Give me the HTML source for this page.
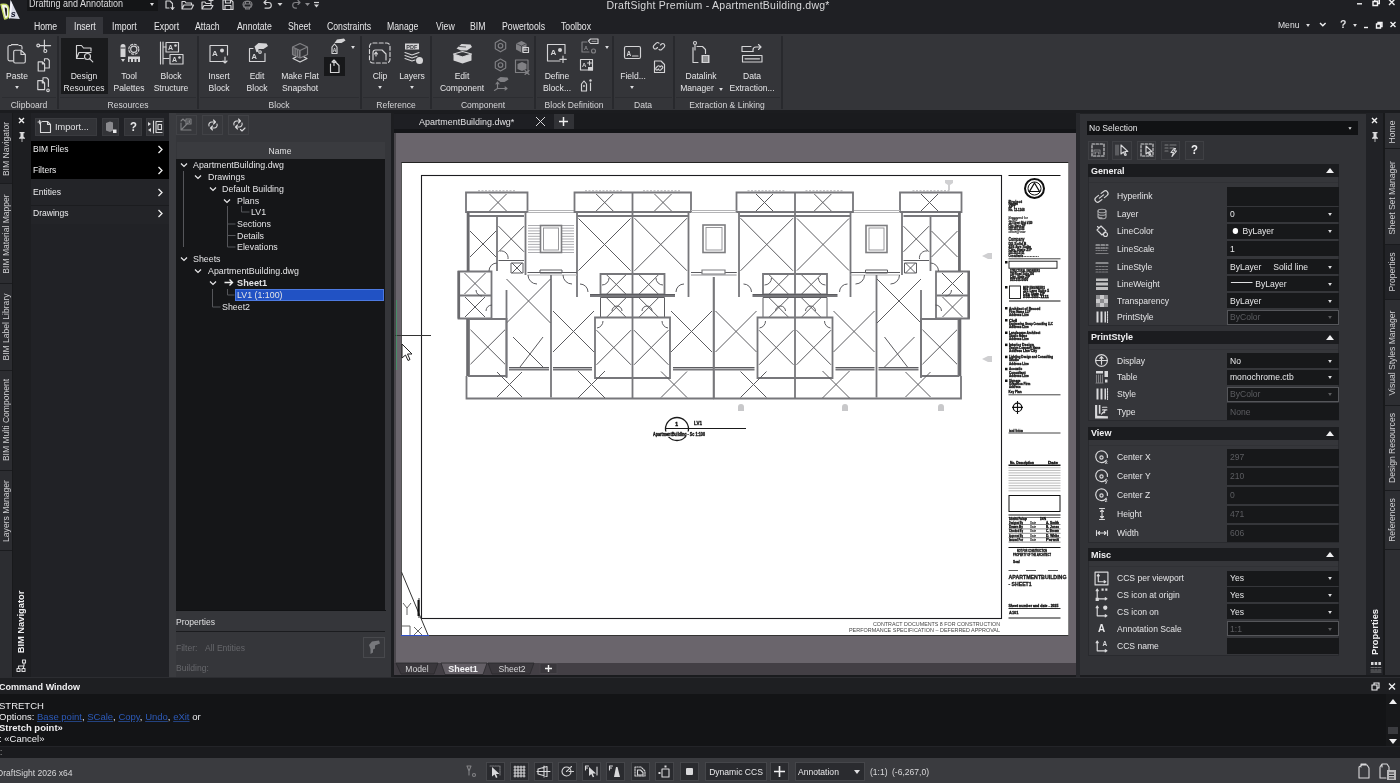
<!DOCTYPE html>
<html lang="en"><head><meta charset="utf-8"><title>DraftSight Premium - ApartmentBuilding.dwg*</title>
<style>
*{box-sizing:border-box;margin:0;padding:0}
html,body{width:1400px;height:783px;overflow:hidden;background:#1f2023}
body{font-family:"Liberation Sans",sans-serif;font-size:10.5px;color:#e4e4e6;position:relative;-webkit-font-smoothing:antialiased}
.a{position:absolute}
.t{position:absolute;white-space:nowrap;line-height:1;font-size:9.5px;transform-origin:0 50%;transform:scaleX(.9)}
.c{transform-origin:50% 50%;transform:translateX(-50%) scaleX(.9)}
svg{position:absolute;overflow:visible}
.ic{stroke:#d9d9db;fill:none;stroke-width:1.1;stroke-linecap:round;stroke-linejoin:round}
.icf{fill:#d9d9db;stroke:none}
.dim{opacity:.45}
/* top */
#title{left:0;top:0;width:1400px;height:34px;background:#1f2024}
#ribbon{left:0;top:34px;width:1400px;height:76px;background:#343539}
.gsep{position:absolute;top:36px;width:1.5px;height:73px;background:#28292d}
.glab{position:absolute;top:97px;height:1px;background:#2c2d31}
.gl{position:absolute;top:99.5px;font-size:9.5px;color:#d6d6d8;white-space:nowrap;transform:translateX(-50%) scaleX(.9);line-height:1}
.rl{position:absolute;font-size:9.5px;color:#e6e6e8;white-space:nowrap;transform:translateX(-50%) scaleX(.9);line-height:1}
.mt{position:absolute;top:21.5px;font-size:10px;color:#e6e6e8;white-space:nowrap;line-height:1;transform-origin:0 50%;transform:scaleX(.87)}
.arr{position:absolute;width:0;height:0;border-left:2.5px solid transparent;border-right:2.5px solid transparent;border-top:3px solid #e0e0e2}
#app{position:absolute;left:0;top:0;width:1400px;height:783px;will-change:transform}
</style></head><body><div id="app">

<div id="title" class="a"></div>
<div class="a" style="left:27px;top:0px;width:131px;height:11px;background:#141517;"></div>
<div class="t" style="left:28.6px;top:-0.7px;font-size:10px;color:#dcdcde;transform:scaleX(0.9)">Drafting and Annotation</div>
<div class="arr" style="left:150px;top:3px"></div>
<div class="t" style="left:606.5px;top:-0.5px;font-size:10.5px;color:#d8d8da;letter-spacing:.25px;transform:scaleX(1)">DraftSight Premium - ApartmentBuilding.dwg*</div>
<div class="a" style="left:66px;top:17px;width:37px;height:17px;background:#34353a;"></div>
<div class="mt" style="left:34px">Home</div>
<div class="mt" style="left:74px">Insert</div>
<div class="mt" style="left:112px">Import</div>
<div class="mt" style="left:154px">Export</div>
<div class="mt" style="left:195px">Attach</div>
<div class="mt" style="left:237px">Annotate</div>
<div class="mt" style="left:288px">Sheet</div>
<div class="mt" style="left:327px">Constraints</div>
<div class="mt" style="left:387px">Manage</div>
<div class="mt" style="left:436px">View</div>
<div class="mt" style="left:470px">BIM</div>
<div class="mt" style="left:502px">Powertools</div>
<div class="mt" style="left:561px">Toolbox</div>
<div class="t" style="left:1278px;top:20px;font-size:9.5px;color:#e0e0e2">Menu</div>
<div class="arr" style="left:1306px;top:24px;transform:scale(.95)"></div>
<div class="arr" style="left:1353px;top:24px;transform:scale(.95)"></div>
<div class="t" style="left:1340px;top:19px;font-size:11px;font-weight:bold;color:#e0e0e2;transform:scaleX(0.95)">?</div>
<div id="ribbon" class="a"></div>
<div class="a" style="left:0px;top:110px;width:1400px;height:3.5px;background:#1b1c1f;"></div>
<div class="glab" style="left:2px;width:54px"></div>
<div class="gsep" style="left:57px"></div>
<div class="glab" style="left:60px;width:136px"></div>
<div class="gsep" style="left:197px"></div>
<div class="glab" style="left:200px;width:159px"></div>
<div class="gsep" style="left:360px"></div>
<div class="glab" style="left:363px;width:66px"></div>
<div class="gsep" style="left:430px"></div>
<div class="glab" style="left:433px;width:100px"></div>
<div class="gsep" style="left:534px"></div>
<div class="glab" style="left:537px;width:74px"></div>
<div class="gsep" style="left:612px"></div>
<div class="glab" style="left:615px;width:57px"></div>
<div class="gsep" style="left:673px"></div>
<div class="glab" style="left:676px;width:104px"></div>
<div class="gsep" style="left:781px"></div>
<div class="gl" style="left:28.5px">Clipboard</div>
<div class="gl" style="left:127.5px">Resources</div>
<div class="gl" style="left:279.0px">Block</div>
<div class="gl" style="left:395.5px">Reference</div>
<div class="gl" style="left:482.5px">Component</div>
<div class="gl" style="left:573.5px">Block Definition</div>
<div class="gl" style="left:643.0px">Data</div>
<div class="gl" style="left:727px">Extraction &amp; Linking</div>
<div class="a" style="left:61px;top:38px;width:47px;height:56px;background:#1a1b1d;"></div>
<div class="a" style="left:324px;top:57px;width:21px;height:18.5px;background:#17181a;"></div>
<div class="rl" style="left:17px;top:71px">Paste</div>
<div class="rl" style="left:84px;top:71px">Design</div>
<div class="rl" style="left:84px;top:83px">Resources</div>
<div class="rl" style="left:129px;top:71px">Tool</div>
<div class="rl" style="left:129px;top:83px">Palettes</div>
<div class="rl" style="left:171px;top:71px">Block</div>
<div class="rl" style="left:171px;top:83px">Structure</div>
<div class="rl" style="left:219px;top:71px">Insert</div>
<div class="rl" style="left:219px;top:83px">Block</div>
<div class="rl" style="left:257px;top:71px">Edit</div>
<div class="rl" style="left:257px;top:83px">Block</div>
<div class="rl" style="left:300px;top:71px">Make Flat</div>
<div class="rl" style="left:300px;top:83px">Snapshot</div>
<div class="rl" style="left:380px;top:71px">Clip</div>
<div class="rl" style="left:412px;top:71px">Layers</div>
<div class="rl" style="left:462px;top:71px">Edit</div>
<div class="rl" style="left:462px;top:83px">Component</div>
<div class="rl" style="left:557px;top:71px">Define</div>
<div class="rl" style="left:557px;top:83px">Block...</div>
<div class="rl" style="left:633px;top:71px">Field...</div>
<div class="rl" style="left:701px;top:71px">Datalink</div>
<div class="rl" style="left:697px;top:83px">Manager</div>
<div class="rl" style="left:752px;top:71px">Data</div>
<div class="rl" style="left:752px;top:83px">Extraction...</div>
<div class="arr" style="left:15px;top:86px;transform:scale(.95)"></div>
<div class="arr" style="left:378px;top:86px;transform:scale(.95)"></div>
<div class="arr" style="left:410px;top:86px;transform:scale(.95)"></div>
<div class="arr" style="left:630px;top:86px;transform:scale(.95)"></div>
<div class="arr" style="left:719px;top:88px;transform:scale(.95)"></div>
<div class="arr" style="left:351px;top:46px;transform:scale(.95)"></div>
<div class="arr" style="left:605px;top:46px;transform:scale(.95)"></div>
<svg style="left:0;top:0" width="1400" height="113" viewBox="0 0 1400 113">
<path d="M10.600 0L19.800 19.100 8.900 18.300z" fill="#d9dbe7"/><path d="M10.600 0L12.500 5 10 18.400 8.900 18.300z" fill="#f4f5fa"/>
<path d="M0.900 4.300C4.500 3.600 8.300 4.200 8.500 8L8.700 15C8.600 17.500 7 18.800 4.600 19z" fill="#f2f4ea" stroke="#c3d860" stroke-width="1.300" stroke-linejoin="round"/><path d="M4.600 7.600C6.200 7.400 6.900 8.200 6.900 9.500V14.200C6.900 15.300 6.400 15.900 5.900 16z" fill="#101014"/>
<text x="10.700" y="16.800" font-size="9" font-weight="bold" font-style="italic" fill="#14162a" font-family="Liberation Sans,sans-serif">s</text>
<path d="M166 1v7h3M166 1h4l2.500 2.500M172.500 4.500v.5M171 7.500l1.500 2 1.500-2M172.500 9.500v-4" stroke="#d4d4d6" fill="none" stroke-width="1.150" stroke-linecap="round" stroke-linejoin="round"/>
<path d="M182 9V1.500h3l1 1.500h5.500v2M182 9l2-4h9.500l-2 4z" stroke="#d4d4d6" fill="none" stroke-width="1.150" stroke-linecap="round" stroke-linejoin="round"/>
<path d="M202 9V2h3l1 1.500h5V5M202 9l2-3.500h9l-2 3.500zM209 .5h4M211 -1.500v4" stroke="#d4d4d6" fill="none" stroke-width="1.150" stroke-linecap="round" stroke-linejoin="round"/>
<path d="M223 0h8l2 2v7.500h-10zM225.500 0v3h5v-3M225 9.500v-4h6v4" stroke="#d4d4d6" fill="none" stroke-width="1.150" stroke-linecap="round" stroke-linejoin="round" stroke-width="1.300"/>
<path d="M244 4h7v3h-7zM245.500 4v-2.500h4v2.500M245.500 7v2h4v-2" stroke="#808084" fill="none" stroke-width="1.150" stroke-linecap="round" stroke-linejoin="round"/>
<ellipse cx="247.500" cy="4.500" rx="4.500" ry="3.500" stroke="#808084" fill="none" stroke-width="1.150" stroke-linecap="round" stroke-linejoin="round"/>
<path d="M264 2.500h4.500a2.800 2.800 0 0 1 0 5.600h-3.500M266 .5l-2 2 2 2" stroke="#d4d4d6" fill="none" stroke-width="1.150" stroke-linecap="round" stroke-linejoin="round" stroke-width="1.500"/>
<path d="M300 2.500h-4.500a2.800 2.800 0 0 0 0 5.600h1M298 .5l2 2-2 2" stroke="#808084" fill="none" stroke-width="1.150" stroke-linecap="round" stroke-linejoin="round" stroke-width="1.400"/>
<path d="M277.5 3h5l-2.500 3z" fill="#d4d4d6"/>
<path d="M305 3h5l-2.500 3z" fill="#8c8c90"/>
<path d="M314 4.5h5l-2.500 3z" fill="#d4d4d6"/>
<path d="M314 2.500h5" stroke="#d4d4d6" stroke-width="1.200"/>
<path d="M1357 3.800h5" stroke="#f2f2f4" fill="none" stroke-width="1.400"/><path d="M1373 1.500h4.500v4h-4.500zM1374.800 1.500v-2h4.500v4h-1.800" stroke="#f2f2f4" fill="none" stroke-width="1.400" stroke-width="1.100"/><path d="M1389 -.5l5.500 5.500M1394.500 -.5l-5.500 5.500" stroke="#f2f2f4" fill="none" stroke-width="1.400" stroke-width="1.600"/>
<path d="M1364 27.500h4" stroke="#f2f2f4" fill="none" stroke-width="1.400"/><path d="M1376.500 24h4v4h-4zM1378 24v-1.500h4v4h-1.500" stroke="#f2f2f4" fill="none" stroke-width="1.400" stroke-width="1"/><path d="M1390.500 22l5 5M1395.500 22l-5 5" stroke="#f2f2f4" fill="none" stroke-width="1.400" stroke-width="1.400"/>
<path d="M1320 23l2.800 2.800 2.800-2.800" stroke="#f2f2f4" fill="none" stroke-width="1.400" stroke-width="1.500"/>
<path d="M13 60.800H9.500a1.500 1.500 0 0 1-1.500-1.500V47a1.500 1.500 0 0 1 1.500-1.500H11M19 45.500h1.500a1.500 1.500 0 0 1 1.500 1.500v2" stroke="#d4d4d6" fill="none" stroke-width="1.150" stroke-linecap="round" stroke-linejoin="round"/>
<path d="M11.500 44.600h6.500" stroke="#d4d4d6" fill="none" stroke-width="1.150" stroke-linecap="round" stroke-linejoin="round" stroke-width="1.900"/>
<path d="M15.200 50.200H21L25.300 54.500V61.500a1.500 1.500 0 0 1-1.500 1.500H15.200a1.500 1.500 0 0 1-1.500-1.500V51.700a1.500 1.500 0 0 1 1.500-1.500zM21 50.200V54.500H25.300" stroke="#d4d4d6" fill="none" stroke-width="1.150" stroke-linecap="round" stroke-linejoin="round"/>
<path d="M39.600 45.600H50.600" stroke="#d4d4d6" fill="none" stroke-width="1.150" stroke-linecap="round" stroke-linejoin="round" stroke-width="1.500"/><path d="M44.400 40V49.500" stroke="#d4d4d6" fill="none" stroke-width="1.150" stroke-linecap="round" stroke-linejoin="round" stroke-width="1.500"/><circle cx="38.200" cy="45.500" r="1.400" stroke="#d4d4d6" fill="none" stroke-width="1.150" stroke-linecap="round" stroke-linejoin="round"/><circle cx="45.300" cy="51" r="1.500" stroke="#d4d4d6" fill="none" stroke-width="1.150" stroke-linecap="round" stroke-linejoin="round"/>
<path d="M44.500 61v-2.300h3l1.800 1.800v7.500h-4M38.200 61.800h4.200l2.200 2.200v7h-6.400zM42.400 61.800v2.200h2.200" stroke="#d4d4d6" fill="none" stroke-width="1.150" stroke-linecap="round" stroke-linejoin="round"/>
<path d="M43 80v-2.300h3.600l1.800 1.800v7M37.800 80.600h4.500l2.300 2.300v6.700h-6.800zM42.300 80.600v2.300h2.300" stroke="#d4d4d6" fill="none" stroke-width="1.150" stroke-linecap="round" stroke-linejoin="round"/>
<circle cx="48" cy="90.300" r="1.300" stroke="#d4d4d6" fill="none" stroke-width="1.150" stroke-linecap="round" stroke-linejoin="round"/>
<path d="M76.500 58.500v-13h5l2 2.500h7.500v3M76.500 58.500l2.500-6h12M76.500 58.500h7" stroke="#d4d4d6" fill="none" stroke-width="1.150" stroke-linecap="round" stroke-linejoin="round"/>
<circle cx="87.500" cy="56.500" r="3" stroke="#d4d4d6" fill="none" stroke-width="1.150" stroke-linecap="round" stroke-linejoin="round"/>
<path d="M89.800 58.800l3 3" stroke="#d4d4d6" fill="none" stroke-width="1.150" stroke-linecap="round" stroke-linejoin="round"/>
<path d="M120.500 46.500a2.500 2.500 0 0 1 5 0v10.500h-5zM121 59h4l-2 3z" fill="#d4d4d6"/><rect x="120.500" y="47.500" width="5" height="1" fill="#343539"/>
<circle cx="133.800" cy="49.200" r="5" stroke="#d4d4d6" fill="none" stroke-width="1.150" stroke-linecap="round" stroke-linejoin="round" stroke-width="1.800" stroke-dasharray="2.100 1.827" stroke-linecap="butt"/><circle cx="133.800" cy="49.200" r="3.100" stroke="#d4d4d6" fill="none" stroke-width="1.150" stroke-linecap="round" stroke-linejoin="round" stroke-width="2.600"/>
<path d="M128 56.500h12v5.500h-2v-3h-1.500v3h-2v-3h-1.500v3h-2v-3h-1.500v3h-1.500z" fill="#d4d4d6"/>
<path d="M160.500 42v22M163 42v22M163 47h3M163 58.500h6" stroke="#d4d4d6" fill="none" stroke-width="1.150" stroke-linecap="round" stroke-linejoin="round"/>
<rect x="166" y="42.500" width="12.500" height="9.500" stroke="#d4d4d6" fill="none" stroke-width="1.150" stroke-linecap="round" stroke-linejoin="round" stroke-width="1.300"/><rect x="170" y="54.500" width="13" height="9.500" stroke="#d4d4d6" fill="none" stroke-width="1.150" stroke-linecap="round" stroke-linejoin="round" stroke-width="1.300"/>
<text x="168" y="50" font-size="7" font-weight="bold" fill="#d4d4d6" font-family="Liberation Sans,sans-serif">A</text><circle cx="175.5" cy="45.5" r="1.300" fill="#d4d4d6"/>
<text x="172" y="62" font-size="7" font-weight="bold" fill="#d4d4d6" font-family="Liberation Sans,sans-serif">A</text><circle cx="179.5" cy="57.5" r="1.300" fill="#d4d4d6"/>
<path d="M224 61.500h-14v-16h17.500v9.500" stroke="#d4d4d6" fill="none" stroke-width="1.150" stroke-linecap="round" stroke-linejoin="round" stroke-width="1.300"/><text x="212" y="56" font-size="8" font-weight="bold" fill="#d4d4d6" font-family="Liberation Sans,sans-serif">A</text><circle cx="222" cy="50.500" r="2" fill="#d4d4d6"/>
<path d="M225 57v5.500M223 61l2 2 2-2" stroke="#d4d4d6" fill="none" stroke-width="1.150" stroke-linecap="round" stroke-linejoin="round"/>
<path d="M253 48.500h-3.500v13h15.500v-8" stroke="#d4d4d6" fill="none" stroke-width="1.150" stroke-linecap="round" stroke-linejoin="round" stroke-width="1.300"/><text x="251.500" y="58.500" font-size="7.500" font-weight="bold" fill="#d4d4d6" font-family="Liberation Sans,sans-serif">A</text><circle cx="260" cy="52" r="1.300" stroke="#d4d4d6" fill="none" stroke-width="1.150" stroke-linecap="round" stroke-linejoin="round" stroke-width=".9"/>
<path d="M254.500 46.500l4-3.500 8 .5 1.500 2.500-4.500 3h-5v2.500l-2 .8z" fill="#d4d4d6"/>
<path d="M292.500 47l7.500-3.500 7.500 3.500v7.500l-7.500 3.500-7.500-3.500zM292.500 47l7.500 3.500 7.500-3.500M300 50.500v7.500" stroke="#808084" fill="none" stroke-width="1.150" stroke-linecap="round" stroke-linejoin="round" stroke-width="1.200"/><path d="M293 58.500l7 3.500 7-3.500M293 58.500l3-1.500M307 58.500l-3-1.500" stroke="#d4d4d6" fill="none" stroke-width="1.150" stroke-linecap="round" stroke-linejoin="round" stroke-width="1"/>
<path d="M294.0 48.5v6.500" stroke="#808084" fill="none" stroke-width="1.150" stroke-linecap="round" stroke-linejoin="round" stroke-width=".6"/>
<path d="M295.8 49.3v6.500" stroke="#808084" fill="none" stroke-width="1.150" stroke-linecap="round" stroke-linejoin="round" stroke-width=".6"/>
<path d="M297.6 50.1v6.500" stroke="#808084" fill="none" stroke-width="1.150" stroke-linecap="round" stroke-linejoin="round" stroke-width=".6"/>
<path d="M299.4 50.9v6.500" stroke="#808084" fill="none" stroke-width="1.150" stroke-linecap="round" stroke-linejoin="round" stroke-width=".6"/>
<path d="M332 53.500v-6.500l2.500-3 2.500 3v6.500z" stroke="#d4d4d6" fill="none" stroke-width="1.150" stroke-linecap="round" stroke-linejoin="round" stroke-width="1.200"/><text x="332.800" y="52" font-size="5" font-weight="bold" fill="#d4d4d6" font-family="Liberation Sans,sans-serif">A</text><path d="M334.500 43l2.500-3.500 7-1 1.500 2-4 2.500h-4z" fill="#d4d4d6"/>
<path d="M330.500 64v8.500h8.500v-7l-3-3h-3M334 65.500v-5M332 62l2-2 2 2" stroke="#d4d4d6" fill="none" stroke-width="1.150" stroke-linecap="round" stroke-linejoin="round"/>
<rect x="369.500" y="43" width="20.500" height="20" rx="3.500" stroke="#d4d4d6" fill="none" stroke-width="1.150" stroke-linecap="round" stroke-linejoin="round" stroke-width="1.400" stroke-dasharray="4 2.200"/>
<path d="M373 60v-7.500a2.500 2.500 0 0 1 2.500-2.500h6.500l4 4v6M374.500 54l1.500-2 1.500 2M376 52v4" stroke="#d4d4d6" fill="none" stroke-width="1.150" stroke-linecap="round" stroke-linejoin="round"/>
<rect x="405" y="43.500" width="14" height="6" fill="#d4d4d6"/><text x="406.300" y="48.800" font-size="5.500" font-weight="bold" fill="#343539" font-family="Liberation Sans,sans-serif">PDF</text>
<path d="M405 52.500l7 2.500 7-2.500M405 55.500l7 2.500 5-1.800M405 58.500l7 2.500 3-1" stroke="#d4d4d6" fill="none" stroke-width="1.150" stroke-linecap="round" stroke-linejoin="round"/>
<circle cx="419.500" cy="60.500" r="3.500" fill="#d4d4d6"/>
<path d="M453.500 54l9 3v6.500l-9-3zM471.500 54l-9 3v6.500l9-3z" fill="#d4d4d6"/><path d="M453.500 54l9-2.500 9 2.500-9 3z" stroke="#d4d4d6" fill="none" stroke-width="1.150" stroke-linecap="round" stroke-linejoin="round"/><path d="M456.500 48.500l5-4.500 9 .5 1.500 2.500-5 3.500h-6z" fill="#d4d4d6"/><path d="M459 46.500l7 .5" stroke="#343539" stroke-width=".8"/>
<path d="M500.500 39.8l5.200 3v6l-5.200 3-5.200-3v-6z" stroke="#808084" fill="none" stroke-width="1.150" stroke-linecap="round" stroke-linejoin="round" stroke-width="1.300"/><circle cx="500.500" cy="45.8" r="2.300" stroke="#808084" fill="none" stroke-width="1.150" stroke-linecap="round" stroke-linejoin="round"/>
<path d="M500.500 59l5.200 3v6l-5.200 3-5.200-3v-6z" stroke="#808084" fill="none" stroke-width="1.150" stroke-linecap="round" stroke-linejoin="round" stroke-width="1.300"/><circle cx="500.500" cy="65" r="2.300" stroke="#808084" fill="none" stroke-width="1.150" stroke-linecap="round" stroke-linejoin="round"/>
<path d="M516 43.500l5.500-2.500 5 2.500v6l-5 3-5.500-3z" fill="#808084"/><path d="M516 43.500l5.500 2.500 5-2.500M521.500 46v6.500" stroke="#343539" stroke-width=".7" fill="none"/><rect x="523" y="47.500" width="5.500" height="5" stroke="#d4d4d6" fill="none" stroke-width="1.150" stroke-linecap="round" stroke-linejoin="round"/><path d="M524.500 50h2.500" stroke="#d4d4d6" fill="none" stroke-width="1.150" stroke-linecap="round" stroke-linejoin="round"/>
<rect x="515.500" y="60" width="12.500" height="12.500" stroke="#808084" fill="none" stroke-width="1.150" stroke-linecap="round" stroke-linejoin="round" stroke-width="1"/><path d="M517.500 64l4.500-2 4.500 2v5l-4.500 2-4.500-2z" fill="#808084"/><path d="M525 70.500l4 4M529 70.500l-4 4" stroke="#808084" fill="none" stroke-width="1.150" stroke-linecap="round" stroke-linejoin="round" stroke-width="1"/>
<path d="M497 79.500l3.500-2.500 7 .5 1 2-4 2.500h-4z" fill="#808084"/><path d="M497.500 82v6.500h9M496 84l1.500-2 1.500 2M505 87l2 1.500-2 1.500M494.500 90.500l3-2" stroke="#808084" fill="none" stroke-width="1.150" stroke-linecap="round" stroke-linejoin="round" stroke-width="1"/>
<path d="M560 61h-12.500v-16.500h17.500v9" stroke="#d4d4d6" fill="none" stroke-width="1.150" stroke-linecap="round" stroke-linejoin="round" stroke-width="1.300"/><text x="550.500" y="55" font-size="8" font-weight="bold" fill="#d4d4d6" font-family="Liberation Sans,sans-serif">A</text><circle cx="560" cy="50" r="2" fill="#d4d4d6"/>
<path d="M563 56v6.500M559.800 59.300h6.500" stroke="#d4d4d6" fill="none" stroke-width="1.150" stroke-linecap="round" stroke-linejoin="round"/>
<path d="M589 52h-7v-10h5" stroke="#808084" fill="none" stroke-width="1.150" stroke-linecap="round" stroke-linejoin="round"/><text x="584" y="49.500" font-size="5.500" font-weight="bold" fill="#8c8c90" font-family="Liberation Sans,sans-serif">A</text><path d="M588.500 41l2-2h7.500v4.500h-7.500z" stroke="#d4d4d6" fill="none" stroke-width="1.150" stroke-linecap="round" stroke-linejoin="round" stroke-width="1"/><path d="M592 41.300h4" stroke="#808084" fill="none" stroke-width="1.150" stroke-linecap="round" stroke-linejoin="round" stroke-width="1.500"/><circle cx="593.500" cy="51" r="2" stroke="#808084" fill="none" stroke-width="1.150" stroke-linecap="round" stroke-linejoin="round"/>
<rect x="580.500" y="59.500" width="12" height="10.500" stroke="#d4d4d6" fill="none" stroke-width="1.150" stroke-linecap="round" stroke-linejoin="round" stroke-width="1.200"/><text x="582" y="66.500" font-size="6" font-weight="bold" fill="#d4d4d6" font-family="Liberation Sans,sans-serif">A</text><path d="M589.500 61v4M587.500 63h4" stroke="#d4d4d6" fill="none" stroke-width="1.150" stroke-linecap="round" stroke-linejoin="round" stroke-width="1"/><rect x="588" y="67" width="5" height="3.500" fill="#d4d4d6"/>
<path d="M581.500 91v-7l2.500-3 2.500 3v7z" stroke="#d4d4d6" fill="none" stroke-width="1.150" stroke-linecap="round" stroke-linejoin="round"/><circle cx="584" cy="86" r=".9" fill="#d4d4d6"/><path d="M590.500 83v7.500" stroke="#d4d4d6" fill="none" stroke-width="1.150" stroke-linecap="round" stroke-linejoin="round" stroke-width="2.200"/><circle cx="590.500" cy="80.500" r="1.200" fill="#d4d4d6"/>
<rect x="624.500" y="46.500" width="16" height="12" rx="1.500" stroke="#d4d4d6" fill="none" stroke-width="1.150" stroke-linecap="round" stroke-linejoin="round" stroke-width="1.300"/><text x="626.500" y="56" font-size="6.500" font-weight="bold" fill="#d4d4d6" font-family="Liberation Sans,sans-serif">A</text><path d="M632.500 56h5.500" stroke="#d4d4d6" fill="none" stroke-width="1.150" stroke-linecap="round" stroke-linejoin="round"/>
<path d="M657.500 47.500l-1 1a2 2 0 0 1-2.800-2.800l2.500-2.500a2 2 0 0 1 2.800 0M660.500 45l1-1a2 2 0 0 1 2.800 2.800l-2.500 2.500a2 2 0 0 1-2.800 0" stroke="#d4d4d6" fill="none" stroke-width="1.150" stroke-linecap="round" stroke-linejoin="round" stroke-width="1.300"/>
<path d="M654.500 72.500v-11.500h6.500l3.500 3.500v8z" stroke="#d4d4d6" fill="none" stroke-width="1.150" stroke-linecap="round" stroke-linejoin="round"/><path d="M658.500 69l-.8.800a1.300 1.300 0 0 1-1.800-1.800l1.800-1.800a1.300 1.300 0 0 1 1.800 0M660 67l.8-.8a1.300 1.300 0 0 1 1.800 1.800l-1.800 1.800a1.300 1.300 0 0 1-1.800 0" stroke="#d4d4d6" fill="none" stroke-width="1.150" stroke-linecap="round" stroke-linejoin="round" stroke-width=".9"/>
<path d="M698 62.500h-5v-15M697 46.500h5.500l3 3v4" stroke="#d4d4d6" fill="none" stroke-width="1.150" stroke-linecap="round" stroke-linejoin="round" stroke-width="1.200"/><path d="M695 50v-5.500a1.500 1.500 0 0 1 0-3 1.500 1.500 0 0 1 0 3" stroke="#d4d4d6" fill="none" stroke-width="1.150" stroke-linecap="round" stroke-linejoin="round" stroke-width="2"/><rect x="701.500" y="55" width="8" height="8" fill="#d4d4d6"/><path d="M703 57h5M703 59h5M703 61h5" stroke="#343539" stroke-width=".8"/>
<path d="M753 51.500h-11v-5h9M742.500 55.500h19.500v6.500h-19.500zM745 58.800h14.500" stroke="#d4d4d6" fill="none" stroke-width="1.150" stroke-linecap="round" stroke-linejoin="round" stroke-width="1.400"/><path d="M753 51.500v-1.500a3 3 0 0 1 3-3h4.500M758.500 44.500l2.500 2.500-2.500 2.500" stroke="#d4d4d6" fill="none" stroke-width="1.150" stroke-linecap="round" stroke-linejoin="round" stroke-width="1.600"/>
</svg>
<div class="a" style="left:0px;top:113px;width:12px;height:564px;background:#2c2d31;"></div>
<div class="a" style="left:0px;top:113px;width:12px;height:70px;background:#232428;"></div>
<div class="a" style="left:0px;top:183px;width:12px;height:1px;background:#1b1c1f;"></div>
<div class="a" style="left:0px;top:283px;width:12px;height:1px;background:#1b1c1f;"></div>
<div class="a" style="left:0px;top:370px;width:12px;height:1px;background:#1b1c1f;"></div>
<div class="a" style="left:0px;top:470px;width:12px;height:1px;background:#1b1c1f;"></div>
<div class="a" style="left:0px;top:550px;width:12px;height:1px;background:#1b1c1f;"></div>
<div class="a" style="left:12px;top:113px;width:1px;height:564px;background:#18191b;"></div>
<div class="t" style="left:5.5px;top:149px;transform-origin:50% 50%;transform:translate(-50%,-50%) rotate(-90deg) scaleX(0.9);font-size:9.5px;color:#cfcfd2">BIM Navigator</div>
<div class="t" style="left:5.5px;top:234px;transform-origin:50% 50%;transform:translate(-50%,-50%) rotate(-90deg) scaleX(0.9);font-size:9.5px;color:#cfcfd2">BIM Material Mapper</div>
<div class="t" style="left:5.5px;top:327px;transform-origin:50% 50%;transform:translate(-50%,-50%) rotate(-90deg) scaleX(0.9);font-size:9.5px;color:#cfcfd2">BIM Label Library</div>
<div class="t" style="left:5.5px;top:420px;transform-origin:50% 50%;transform:translate(-50%,-50%) rotate(-90deg) scaleX(0.9);font-size:9.5px;color:#cfcfd2">BIM Multi Component</div>
<div class="t" style="left:5.5px;top:511px;transform-origin:50% 50%;transform:translate(-50%,-50%) rotate(-90deg) scaleX(0.9);font-size:9.5px;color:#cfcfd2">Layers Manager</div>
<div class="a" style="left:13px;top:113px;width:18px;height:564px;background:#1d1e21;"></div>
<div class="t" style="left:21px;top:622.3px;transform-origin:50% 50%;transform:translate(-50%,-50%) rotate(-90deg) scaleX(0.98);font-size:9.5px;font-weight:bold;color:#f0f0f2">BIM Navigator</div>
<svg style="left:16px;top:115px" width="12" height="30" viewBox="0 0 12 30"><path d="M3 3l5 5M8 3l-5 5" stroke="#f0f0f0" stroke-width="1.4" fill="none"/><path class="icf" d="M3.5 17h5v1.2h-1v3.3l1.5 1.5v.8H6.4v3.2h-.8v-3.2H3v-.8l1.5-1.5v-3.3h-1z"/></svg>
<svg style="left:16px;top:659px" width="12" height="14" viewBox="0 0 12 14"><path class="ic" stroke-width=".9" d="M6.5 1h3v3h-3zM1 9.500h3v3h-3zM6 9.500h3v3h-3zM8 4v3M2.500 9.500v-2.500h5v2.500"/></svg>
<div class="a" style="left:31px;top:113px;width:138px;height:564px;background:#212226;"></div>
<div class="a" style="left:35px;top:118px;width:62px;height:18px;background:#323337;border:1px solid #3a3b3f"></div>
<div class="a" style="left:102px;top:118px;width:17px;height:18px;background:#323337;border:1px solid #3a3b3f"></div>
<div class="a" style="left:124px;top:118px;width:18px;height:18px;background:#323337;border:1px solid #3a3b3f"></div>
<div class="a" style="left:146px;top:118px;width:18px;height:18px;background:#323337;border:1px solid #3a3b3f"></div>
<div class="t" style="left:55px;top:122px;font-size:9.5px;color:#e2e2e4;transform:scaleX(0.97)">Import...</div>
<div class="t" style="left:130px;top:121px;font-size:12px;font-weight:bold;color:#e8e8ea;transform:scaleX(0.95)">?</div>
<svg style="left:37px;top:119px" width="16" height="16" viewBox="0 0 16 16"><path class="ic" d="M3.500 4v9.500h10v-8l-3-3h-5M10.500 2.500v3h3M1 3h3.500M2.700 1.200v3.500"/></svg>
<svg style="left:103px;top:119px" width="16" height="16" viewBox="0 0 16 16"><path d="M3 4l4-1.500 3 1v8l-3 1.500-4-1.500z" fill="#8a8a8e"/><rect x="10" y="10.500" width="3.500" height="3.500" fill="#e8e8ea"/></svg>
<svg style="left:147px;top:119px" width="16" height="16" viewBox="0 0 16 16"><path class="icf" d="M1 3l3 2-3 2zM4 9l-3 2 3 2z"/><path class="ic" d="M6.500 2v12M15 2.500h-6v11h6M11 5.500h3.500v5h-3.500z"/></svg>
<div class="a" style="left:31px;top:141px;width:138px;height:38px;background:#000;"></div>
<div class="a" style="left:31px;top:179px;width:138px;height:26px;background:#232428;"></div>
<div class="a" style="left:31px;top:205px;width:138px;height:1px;background:#1b1c1f;"></div>
<div class="a" style="left:31px;top:206px;width:138px;height:18px;background:#232428;"></div>
<div class="t" style="left:33px;top:144px;font-size:9.5px;color:#ececee">BIM Files</div>
<svg style="left:157px;top:145px" width="7" height="9" viewBox="0 0 7 9"><path d="M1.500 1l3.500 3.500-3.500 3.500" stroke="#f0f0f0" stroke-width="1.300" fill="none"/></svg>
<div class="t" style="left:33px;top:165px;font-size:9.5px;color:#ececee">Filters</div>
<svg style="left:157px;top:166px" width="7" height="9" viewBox="0 0 7 9"><path d="M1.500 1l3.500 3.500-3.500 3.500" stroke="#f0f0f0" stroke-width="1.300" fill="none"/></svg>
<div class="t" style="left:33px;top:187px;font-size:9.5px;color:#ececee">Entities</div>
<svg style="left:157px;top:188px" width="7" height="9" viewBox="0 0 7 9"><path d="M1.500 1l3.500 3.500-3.500 3.500" stroke="#f0f0f0" stroke-width="1.300" fill="none"/></svg>
<div class="t" style="left:33px;top:208px;font-size:9.5px;color:#ececee">Drawings</div>
<svg style="left:157px;top:209px" width="7" height="9" viewBox="0 0 7 9"><path d="M1.500 1l3.500 3.500-3.500 3.500" stroke="#f0f0f0" stroke-width="1.300" fill="none"/></svg>
<div class="a" style="left:169px;top:113px;width:7px;height:564px;background:#3a3b3f;"></div>
<div class="a" style="left:176px;top:113px;width:215px;height:564px;background:#35363a;"></div>
<div class="a" style="left:391px;top:113px;width:3px;height:564px;background:#1d1e21;"></div>
<div class="a" style="left:176px;top:115px;width:21px;height:20px;background:#37383c;border:1px solid #414246"></div>
<div class="a" style="left:202px;top:115px;width:21px;height:20px;background:#37383c;border:1px solid #414246"></div>
<div class="a" style="left:228px;top:115px;width:21px;height:20px;background:#37383c;border:1px solid #414246"></div>
<svg style="left:179px;top:117px" width="16" height="16" viewBox="0 0 16 16"><path class="ic dim" d="M2 6v7h10M3 12l6-6M7 2h5v5h-5zM9 3.500v2M10.500 3.500v2M2 4l2-2 2 2"/></svg>
<svg style="left:205px;top:117px" width="16" height="16" viewBox="0 0 16 16"><path class="ic" stroke-width="1.300" d="M4 9a3 3 0 0 1 3-4h3M8.500 3l2 2-2 2M12 7a3 3 0 0 1-3 4h-3M7.500 9l-2 2 2 2"/></svg>
<svg style="left:231px;top:117px" width="16" height="16" viewBox="0 0 16 16"><path class="ic" stroke-width="1.300" d="M3 8a3 3 0 0 1 3-4h3M7.500 2l2 2-2 2M11 6a3 3 0 0 1-3 4h-3M6.500 8l-2 2 2 2M9.500 12.500l1.500 1.500 3-3"/></svg>
<div class="a" style="left:177px;top:142px;width:208px;height:17px;background:#3a3b3f;"></div>
<div class="t c" style="left:280px;top:146px;font-size:9.5px;color:#e0e0e2">Name</div>
<div class="a" style="left:176px;top:159px;width:209px;height:451.5px;background:#151618;"></div>
<div class="a" style="left:176px;top:610px;width:210px;height:1px;background:#111214;"></div>
<div class="a" style="left:234.5px;top:289px;width:149.5px;height:12px;background:#2152c4;border:1px solid #4d7ae0"></div>
<div class="t" style="left:193.0px;top:160px;font-size:9.5px;color:#e4e4e6;transform:scaleX(0.93)">ApartmentBuilding.dwg</div>
<svg style="left:179.5px;top:162px" width="8" height="6" viewBox="0 0 8 6"><path d="M1 1.500l3 3 3-3" stroke="#e8e8ea" stroke-width="1.200" fill="none"/></svg>
<div class="t" style="left:207.6px;top:172px;font-size:9.5px;color:#e4e4e6;transform:scaleX(0.93)">Drawings</div>
<svg style="left:194.1px;top:174px" width="8" height="6" viewBox="0 0 8 6"><path d="M1 1.500l3 3 3-3" stroke="#e8e8ea" stroke-width="1.200" fill="none"/></svg>
<div class="t" style="left:222.2px;top:184px;font-size:9.5px;color:#e4e4e6;transform:scaleX(0.93)">Default Building</div>
<svg style="left:208.7px;top:186px" width="8" height="6" viewBox="0 0 8 6"><path d="M1 1.500l3 3 3-3" stroke="#e8e8ea" stroke-width="1.200" fill="none"/></svg>
<div class="t" style="left:236.8px;top:195.5px;font-size:9.5px;color:#e4e4e6;transform:scaleX(0.93)">Plans</div>
<svg style="left:223.3px;top:197.5px" width="8" height="6" viewBox="0 0 8 6"><path d="M1 1.500l3 3 3-3" stroke="#e8e8ea" stroke-width="1.200" fill="none"/></svg>
<div class="t" style="left:251.4px;top:207px;font-size:9.5px;color:#e4e4e6;transform:scaleX(0.93)">LV1</div>
<div class="t" style="left:236.8px;top:219px;font-size:9.5px;color:#e4e4e6;transform:scaleX(0.93)">Sections</div>
<div class="t" style="left:236.8px;top:230.5px;font-size:9.5px;color:#e4e4e6;transform:scaleX(0.93)">Details</div>
<div class="t" style="left:236.8px;top:242px;font-size:9.5px;color:#e4e4e6;transform:scaleX(0.93)">Elevations</div>
<div class="t" style="left:193.0px;top:254px;font-size:9.5px;color:#e4e4e6;transform:scaleX(0.93)">Sheets</div>
<svg style="left:179.5px;top:256px" width="8" height="6" viewBox="0 0 8 6"><path d="M1 1.500l3 3 3-3" stroke="#e8e8ea" stroke-width="1.200" fill="none"/></svg>
<div class="t" style="left:207.6px;top:265.5px;font-size:9.5px;color:#e4e4e6;transform:scaleX(0.93)">ApartmentBuilding.dwg</div>
<svg style="left:194.1px;top:267.5px" width="8" height="6" viewBox="0 0 8 6"><path d="M1 1.500l3 3 3-3" stroke="#e8e8ea" stroke-width="1.200" fill="none"/></svg>
<div class="t" style="left:237.2px;top:277.5px;font-size:9.5px;color:#e4e4e6;font-weight:bold;transform:scaleX(0.97)">Sheet1</div>
<svg style="left:208.7px;top:279.5px" width="8" height="6" viewBox="0 0 8 6"><path d="M1 1.500l3 3 3-3" stroke="#e8e8ea" stroke-width="1.200" fill="none"/></svg>
<div class="t" style="left:237px;top:289.5px;font-size:9.5px;color:#e4e4e6;transform:scaleX(0.93)">LV1 (1:100)</div>
<div class="t" style="left:222px;top:301.5px;font-size:9.5px;color:#e4e4e6;transform:scaleX(0.93)">Sheet2</div>
<svg style="left:224px;top:278px" width="10" height="9" viewBox="0 0 10 9"><path d="M0.500 4.500h8M5.500 1.500l3 3-3 3" stroke="#f0f0f0" stroke-width="1.400" fill="none"/></svg>
<svg style="left:0;top:0" width="400" height="700"><g stroke="#55565a" stroke-width="1" fill="none"><path d="M183.500 171v76M227.500 206v41M227.500 224h8M227.500 235.500h8M227.500 247h8M241.500 206v6h8M212.500 289v18h8M227.500 289v6h7"/></g></svg>
<div class="t" style="left:176px;top:617px;font-size:9.5px;color:#e0e0e2">Properties</div>
<div class="a" style="left:176px;top:631px;width:209px;height:1px;background:#1b1c1f;"></div>
<div class="t" style="left:176px;top:643px;font-size:9.5px;color:#66676b">Filter:</div>
<div class="t" style="left:205px;top:643px;font-size:9.5px;color:#66676b">All Entities</div>
<div class="t" style="left:176px;top:663px;font-size:9.5px;color:#66676b">Building:</div>
<div class="a" style="left:363px;top:637px;width:22px;height:21px;background:#37383c;border:1px solid #48494d"></div>
<svg style="left:366px;top:639px" width="16" height="16" viewBox="0 0 16 16"><path d="M3 6l3-3.500 7-1 1 3-5 2v3l-2 1v3l-2.500 1.500v-5z" fill="#77787c"/></svg>
<div class="a" style="left:394px;top:113px;width:682px;height:20px;background:#1a1b1e;"></div>
<div class="a" style="left:394px;top:113.5px;width:160px;height:15.5px;background:#1e1f23;"></div>
<div class="a" style="left:554px;top:113.5px;width:20px;height:15.5px;background:#313236;"></div>
<div class="a" style="left:394px;top:129px;width:682px;height:4px;background:#141518;"></div>
<div class="t" style="left:419px;top:117.3px;font-size:9.5px;color:#e0e0e2;transform:scaleX(0.94)">ApartmentBuilding.dwg*</div>
<svg style="left:535px;top:116px" width="11" height="11" viewBox="0 0 11 11"><path d="M1 1l9 9M10 1l-9 9" stroke="#d8d8da" stroke-width="1" fill="none"/></svg>
<svg style="left:558px;top:116px" width="11" height="11" viewBox="0 0 11 11"><path d="M5.500 1v9M1 5.500h9" stroke="#f0f0f0" stroke-width="1.500" fill="none"/></svg>
<div class="a" style="left:394px;top:133px;width:682px;height:530px;background:#6a656c;"></div>
<div class="a" style="left:394px;top:133px;width:2px;height:530px;background:#4a474c;"></div>
<div class="a" style="left:1076px;top:113px;width:4px;height:564px;background:#27282c;"></div>
<div class="a" style="left:401px;top:162px;width:668px;height:473.5px;background:#fff;border-top:1px solid #222;border-left:1px solid #555;border-bottom:1px solid #333;border-right:1px solid #888"></div>
<div class="a" style="left:394px;top:663px;width:682px;height:12px;background:#433f45;"></div>
<div class="a" style="left:394px;top:675px;width:682px;height:2px;background:#1a1b1e;"></div>
<svg style="left:394px;top:663px" width="200" height="12" viewBox="0 0 200 12"><path d="M2 0h42l-4 11h-33z" fill="#3a373c" stroke="#2a282c" stroke-width=".8"/><path d="M94 0h46l-4 11h-38z" fill="#3a373c" stroke="#2a282c" stroke-width=".8"/><path d="M47 0h46l-4 11.500h-38z" fill="#645f66" stroke="#2a282c" stroke-width=".8"/><rect x="146" y="0.500" width="17" height="10" fill="#3a373c" stroke="#4a474c" stroke-width=".8"/><path d="M154.500 2v7M151 5.500h7" stroke="#f0f0f0" stroke-width="1.400"/></svg>
<div class="t c" style="left:417px;top:664px;font-size:9.5px;color:#d6d6d8">Model</div>
<div class="t c" style="left:463px;top:664px;font-size:9.5px;color:#f4f4f6;font-weight:bold;transform:translateX(-50%) scaleX(0.95)">Sheet1</div>
<div class="t c" style="left:511.5px;top:664px;font-size:9.5px;color:#d6d6d8">Sheet2</div>
<svg style="left:0;top:0" width="1400" height="783" viewBox="0 0 1400 783">
<rect x="421.500" y="175.500" width="580" height="443" fill="none" stroke="#1c1c20" stroke-width="1.100"/>
<g><path d="M528 225.5H540M562 225.5H574" stroke="#a4a4a8" stroke-width=".9"/><path d="M528 228.2H540M562 228.2H574" stroke="#a4a4a8" stroke-width=".9"/><path d="M528 230.9H540M562 230.9H574" stroke="#a4a4a8" stroke-width=".9"/><path d="M528 233.6H540M562 233.6H574" stroke="#a4a4a8" stroke-width=".9"/><path d="M528 236.3H540M562 236.3H574" stroke="#a4a4a8" stroke-width=".9"/><path d="M528 239.0H540M562 239.0H574" stroke="#a4a4a8" stroke-width=".9"/><path d="M528 241.7H540M562 241.7H574" stroke="#a4a4a8" stroke-width=".9"/><path d="M528 244.4H540M562 244.4H574" stroke="#a4a4a8" stroke-width=".9"/><path d="M528 247.1H540M562 247.1H574" stroke="#a4a4a8" stroke-width=".9"/><path d="M528 249.8H540M562 249.8H574" stroke="#a4a4a8" stroke-width=".9"/><path d="M528 252.5H540M562 252.5H574" stroke="#a4a4a8" stroke-width=".9"/><path d="M466 192.5H527.5V212H466Z" stroke="#77777b" stroke-width="1.800" fill="none"/>
<path d="M489.5 194.0L506.5 211.0M506.5 194.0L489.5 211.0" stroke="#5c5c60" stroke-width="1" fill="none"/>
<path d="M468.500 212V271" stroke="#77777b" stroke-width="1.800" fill="none"/>
<path d="M468.500 216H524" stroke="#77777b" stroke-width="1.800" fill="none"/>
<path d="M497 216V271" stroke="#77777b" stroke-width="1.800" fill="none"/>
<path d="M525.500 212V275" stroke="#77777b" stroke-width="1.800" fill="none"/>
<path d="M470.0 231.0L496.0 257.0M496.0 231.0L470.0 257.0" stroke="#5c5c60" stroke-width="1" fill="none"/>
<path d="M498.5 226.2L524.0 251.8M524.0 226.2L498.5 251.8" stroke="#5c5c60" stroke-width="1" fill="none"/>
<path d="M498.500 260.500H524" stroke="#5c5c60" stroke-width="1" fill="none"/>
<path d="M511 263h12v10h-12z" stroke="#5c5c60" stroke-width="1" fill="none"/>
<path d="M512.0 263.0L522.0 273.0M522.0 263.0L512.0 273.0" stroke="#5c5c60" stroke-width="1" fill="none"/>
<path d="M527.500 210.500H574" stroke="#b4b4b6" stroke-width="1" fill="none"/>
<path d="M527.500 212.500H574" stroke="#b4b4b6" stroke-width="1" fill="none"/>
<rect x="540.500" y="225.500" width="21" height="27" fill="#fff" stroke="#7d7d80" stroke-width="1.600"/>
<rect x="543.500" y="228" width="15" height="22" fill="#fff" stroke="#8d8d90" stroke-width=".9"/>
<path d="M574.5 192.5H691V212H574.5Z" stroke="#77777b" stroke-width="1.800" fill="none"/>
<path d="M632.500 192.500V212" stroke="#77777b" stroke-width="1.800" fill="none"/>
<path d="M596.2 194.0L613.2 211.0M613.2 194.0L596.2 211.0" stroke="#5c5c60" stroke-width="1" fill="none"/>
<path d="M654.5 194.0L671.5 211.0M671.5 194.0L654.5 211.0" stroke="#5c5c60" stroke-width="1" fill="none"/>
<path d="M577 212V297" stroke="#77777b" stroke-width="1.800" fill="none"/>
<path d="M632.500 212V398" stroke="#77777b" stroke-width="1.800" fill="none"/>
<path d="M688.500 212V297" stroke="#77777b" stroke-width="1.800" fill="none"/>
<path d="M577 216H688" stroke="#77777b" stroke-width="1.800" fill="none"/>
<path d="M578.5 218.5L630.5 270.5M630.5 218.5L578.5 270.5" stroke="#5c5c60" stroke-width="1" fill="none"/>
<path d="M634.5 218.2L687.0 270.8M687.0 218.2L634.5 270.8" stroke="#5c5c60" stroke-width="1" fill="none"/>
<path d="M600.5 274H664.5V294.5H600.5Z" stroke="#77777b" stroke-width="1.800" fill="none"/>
<path d="M606.8 275.0L625.8 294.0M625.8 275.0L606.8 294.0" stroke="#5c5c60" stroke-width="1" fill="none"/>
<path d="M639.2 275.0L658.2 294.0M658.2 275.0L639.2 294.0" stroke="#5c5c60" stroke-width="1" fill="none"/>
<path d="M590 296H675" stroke="#77777b" stroke-width="1.800" fill="none"/>
<path d="M590 294.500H675" stroke="#5c5c60" stroke-width="1" fill="none"/>
<path d="M600.5 297.5H664.5V317.5H600.5Z" stroke="#5c5c60" stroke-width="1" fill="none"/>
<path d="M606.8 298.0L625.8 317.0M625.8 298.0L606.8 317.0" stroke="#5c5c60" stroke-width="1" fill="none"/>
<path d="M639.2 298.0L658.2 317.0M658.2 298.0L639.2 317.0" stroke="#5c5c60" stroke-width="1" fill="none"/>
<path d="M527.500 272.500H577" stroke="#5c5c60" stroke-width="1" fill="none"/>
<path d="M527.500 275H577" stroke="#b4b4b6" stroke-width="1" fill="none"/>
<path d="M540 270h22v3h-22z" stroke="#5c5c60" stroke-width="1" fill="none"/>
<path d="M691 272.500H736.500" stroke="#5c5c60" stroke-width="1" fill="none"/>
<path d="M691 275H736.500" stroke="#b4b4b6" stroke-width="1" fill="none"/>
<path d="M691 210.500H736.500" stroke="#b4b4b6" stroke-width="1" fill="none"/>
<path d="M691 212.500H736.500" stroke="#b4b4b6" stroke-width="1" fill="none"/>
<path d="M458.5 271.5H491.5V318.5H458.5Z" stroke="#77777b" stroke-width="1.800" fill="none"/>
<path d="M458.500 295.500H491" stroke="#77777b" stroke-width="1.800" fill="none"/>
<path d="M464.5 273.0L485.5 294.0M485.5 273.0L464.5 294.0" stroke="#5c5c60" stroke-width="1" fill="none"/>
<path d="M465.0 297.0L485.0 317.0M485.0 297.0L465.0 317.0" stroke="#5c5c60" stroke-width="1" fill="none"/>
<path d="M506.500 290V378" stroke="#77777b" stroke-width="1.800" fill="none"/>
<path d="M551 275V397.500" stroke="#77777b" stroke-width="1.800" fill="none"/>
<path d="M506.5 279.0L550.5 323.0M550.5 279.0L506.5 323.0" stroke="#5c5c60" stroke-width="1" fill="none"/>
<path d="M513 337L543 367M520 367L543 337" stroke="#5c5c60" stroke-width="1" fill="none"/>
<path d="M553.0 311.0L594.0 352.0M594.0 311.0L553.0 352.0" stroke="#5c5c60" stroke-width="1" fill="none"/>
<path d="M671.0 311.0L712.0 352.0M712.0 311.0L671.0 352.0" stroke="#5c5c60" stroke-width="1" fill="none"/>
<path d="M713.750 277V398" stroke="#77777b" stroke-width="1.800" fill="none"/>
<path d="M469 319H506.5V376H469Z" stroke="#77777b" stroke-width="1.800" fill="none"/>
<path d="M470.5 329.8L505.0 364.2M505.0 329.8L470.5 364.2" stroke="#5c5c60" stroke-width="1" fill="none"/>
<path d="M595 317.5H670V378H595Z" stroke="#77777b" stroke-width="1.800" fill="none"/>
<path d="M596.5 330.2L631.0 364.8M631.0 330.2L596.5 364.8" stroke="#5c5c60" stroke-width="1" fill="none"/>
<path d="M634.0 330.2L668.5 364.8M668.5 330.2L634.0 364.8" stroke="#5c5c60" stroke-width="1" fill="none"/>
<path d="M466.500 376V398.500H714" stroke="#77777b" stroke-width="1.800" fill="none"/>
<path d="M509 369.500H549" stroke="#77777b" stroke-width="1.800" fill="none"/>
<path d="M553 369.500H592" stroke="#77777b" stroke-width="1.800" fill="none"/>
<path d="M509 367.500H549" stroke="#5c5c60" stroke-width="1" fill="none"/>
<path d="M553 367.500H592" stroke="#5c5c60" stroke-width="1" fill="none"/>
<path d="M497.0 372.0L522.0 397.0M522.0 372.0L497.0 397.0" stroke="#5c5c60" stroke-width="1" fill="none"/>
<path d="M578.0 371.0L605.0 398.0M605.0 371.0L578.0 398.0" stroke="#5c5c60" stroke-width="1" fill="none"/>
<path d="M661.0 371.5L687.0 397.5M687.0 371.5L661.0 397.5" stroke="#5c5c60" stroke-width="1" fill="none"/>
<path d="M673 369.500H713" stroke="#77777b" stroke-width="1.800" fill="none"/>
<path d="M673 367.500H713" stroke="#5c5c60" stroke-width="1" fill="none"/>
<path d="M468 212V271" stroke="#6a6a6e" stroke-width="2.600" fill="none"/>
<path d="M458.800 271V318.500" stroke="#6a6a6e" stroke-width="2.600" fill="none"/>
<path d="M467.500 319V376" stroke="#6a6a6e" stroke-width="2.600" fill="none"/>
<path d="M478 191H515" stroke="#b0b0b3" stroke-width="1.400" stroke-dasharray="2 1.500" fill="none"/>
<path d="M585 191H622" stroke="#b0b0b3" stroke-width="1.400" stroke-dasharray="2 1.500" fill="none"/>
<path d="M643 191H680" stroke="#b0b0b3" stroke-width="1.400" stroke-dasharray="2 1.500" fill="none"/>
<path d="M489 271a8 8 0 0 1 8-8" stroke="#5c5c60" stroke-width="1" fill="none"/>
<path d="M500 251a7 7 0 0 1 8 8" stroke="#5c5c60" stroke-width="1" fill="none"/>
<path d="M528 275a9 9 0 0 0 9 9" stroke="#5c5c60" stroke-width="1" fill="none"/>
<path d="M563 275a9 9 0 0 0 9 9" stroke="#5c5c60" stroke-width="1" fill="none"/>
<path d="M580 284a8 8 0 0 1 8 8" stroke="#5c5c60" stroke-width="1" fill="none"/>
<path d="M684 284a8 8 0 0 0-8 8" stroke="#5c5c60" stroke-width="1" fill="none"/>
<path d="M602 285a7 7 0 0 0 7-7" stroke="#5c5c60" stroke-width="1" fill="none"/>
<path d="M663 285a7 7 0 0 1-7-7" stroke="#5c5c60" stroke-width="1" fill="none"/>
<path d="M612 311a5 5 0 0 1 10 0" stroke="#5c5c60" stroke-width="1" fill="none"/>
<path d="M642 311a5 5 0 0 1 10 0" stroke="#5c5c60" stroke-width="1" fill="none"/>
<path d="M597 328a7 7 0 0 0 6-7" stroke="#5c5c60" stroke-width="1" fill="none"/>
<path d="M668 328a7 7 0 0 1-6-7" stroke="#5c5c60" stroke-width="1" fill="none"/>
<path d="M476 290a6 6 0 0 0 6 6" stroke="#5c5c60" stroke-width="1" fill="none"/>
<path d="M486 311a6 6 0 0 1 6-6" stroke="#5c5c60" stroke-width="1" fill="none"/></g>
<g transform="translate(1427.500,0) scale(-1,1)"><path d="M466 192.5H527.5V212H466Z" stroke="#77777b" stroke-width="1.800" fill="none"/>
<path d="M489.5 194.0L506.5 211.0M506.5 194.0L489.5 211.0" stroke="#5c5c60" stroke-width="1" fill="none"/>
<path d="M468.500 212V271" stroke="#77777b" stroke-width="1.800" fill="none"/>
<path d="M468.500 216H524" stroke="#77777b" stroke-width="1.800" fill="none"/>
<path d="M497 216V271" stroke="#77777b" stroke-width="1.800" fill="none"/>
<path d="M525.500 212V275" stroke="#77777b" stroke-width="1.800" fill="none"/>
<path d="M470.0 231.0L496.0 257.0M496.0 231.0L470.0 257.0" stroke="#5c5c60" stroke-width="1" fill="none"/>
<path d="M498.5 226.2L524.0 251.8M524.0 226.2L498.5 251.8" stroke="#5c5c60" stroke-width="1" fill="none"/>
<path d="M498.500 260.500H524" stroke="#5c5c60" stroke-width="1" fill="none"/>
<path d="M511 263h12v10h-12z" stroke="#5c5c60" stroke-width="1" fill="none"/>
<path d="M512.0 263.0L522.0 273.0M522.0 263.0L512.0 273.0" stroke="#5c5c60" stroke-width="1" fill="none"/>
<path d="M527.500 210.500H574" stroke="#b4b4b6" stroke-width="1" fill="none"/>
<path d="M527.500 212.500H574" stroke="#b4b4b6" stroke-width="1" fill="none"/>
<rect x="540.500" y="225.500" width="21" height="27" fill="#fff" stroke="#7d7d80" stroke-width="1.600"/>
<rect x="543.500" y="228" width="15" height="22" fill="#fff" stroke="#8d8d90" stroke-width=".9"/>
<path d="M574.5 192.5H691V212H574.5Z" stroke="#77777b" stroke-width="1.800" fill="none"/>
<path d="M632.500 192.500V212" stroke="#77777b" stroke-width="1.800" fill="none"/>
<path d="M596.2 194.0L613.2 211.0M613.2 194.0L596.2 211.0" stroke="#5c5c60" stroke-width="1" fill="none"/>
<path d="M654.5 194.0L671.5 211.0M671.5 194.0L654.5 211.0" stroke="#5c5c60" stroke-width="1" fill="none"/>
<path d="M577 212V297" stroke="#77777b" stroke-width="1.800" fill="none"/>
<path d="M632.500 212V398" stroke="#77777b" stroke-width="1.800" fill="none"/>
<path d="M688.500 212V297" stroke="#77777b" stroke-width="1.800" fill="none"/>
<path d="M577 216H688" stroke="#77777b" stroke-width="1.800" fill="none"/>
<path d="M578.5 218.5L630.5 270.5M630.5 218.5L578.5 270.5" stroke="#5c5c60" stroke-width="1" fill="none"/>
<path d="M634.5 218.2L687.0 270.8M687.0 218.2L634.5 270.8" stroke="#5c5c60" stroke-width="1" fill="none"/>
<path d="M600.5 274H664.5V294.5H600.5Z" stroke="#77777b" stroke-width="1.800" fill="none"/>
<path d="M606.8 275.0L625.8 294.0M625.8 275.0L606.8 294.0" stroke="#5c5c60" stroke-width="1" fill="none"/>
<path d="M639.2 275.0L658.2 294.0M658.2 275.0L639.2 294.0" stroke="#5c5c60" stroke-width="1" fill="none"/>
<path d="M590 296H675" stroke="#77777b" stroke-width="1.800" fill="none"/>
<path d="M590 294.500H675" stroke="#5c5c60" stroke-width="1" fill="none"/>
<path d="M600.5 297.5H664.5V317.5H600.5Z" stroke="#5c5c60" stroke-width="1" fill="none"/>
<path d="M606.8 298.0L625.8 317.0M625.8 298.0L606.8 317.0" stroke="#5c5c60" stroke-width="1" fill="none"/>
<path d="M639.2 298.0L658.2 317.0M658.2 298.0L639.2 317.0" stroke="#5c5c60" stroke-width="1" fill="none"/>
<path d="M527.500 272.500H577" stroke="#5c5c60" stroke-width="1" fill="none"/>
<path d="M527.500 275H577" stroke="#b4b4b6" stroke-width="1" fill="none"/>
<path d="M540 270h22v3h-22z" stroke="#5c5c60" stroke-width="1" fill="none"/>
<path d="M691 272.500H736.500" stroke="#5c5c60" stroke-width="1" fill="none"/>
<path d="M691 275H736.500" stroke="#b4b4b6" stroke-width="1" fill="none"/>
<path d="M691 210.500H736.500" stroke="#b4b4b6" stroke-width="1" fill="none"/>
<path d="M691 212.500H736.500" stroke="#b4b4b6" stroke-width="1" fill="none"/>
<path d="M458.5 271.5H491.5V318.5H458.5Z" stroke="#77777b" stroke-width="1.800" fill="none"/>
<path d="M458.500 295.500H491" stroke="#77777b" stroke-width="1.800" fill="none"/>
<path d="M464.5 273.0L485.5 294.0M485.5 273.0L464.5 294.0" stroke="#5c5c60" stroke-width="1" fill="none"/>
<path d="M465.0 297.0L485.0 317.0M485.0 297.0L465.0 317.0" stroke="#5c5c60" stroke-width="1" fill="none"/>
<path d="M506.500 290V378" stroke="#77777b" stroke-width="1.800" fill="none"/>
<path d="M551 275V397.500" stroke="#77777b" stroke-width="1.800" fill="none"/>
<path d="M506.5 279.0L550.5 323.0M550.5 279.0L506.5 323.0" stroke="#5c5c60" stroke-width="1" fill="none"/>
<path d="M513 337L543 367M520 367L543 337" stroke="#5c5c60" stroke-width="1" fill="none"/>
<path d="M553.0 311.0L594.0 352.0M594.0 311.0L553.0 352.0" stroke="#5c5c60" stroke-width="1" fill="none"/>
<path d="M671.0 311.0L712.0 352.0M712.0 311.0L671.0 352.0" stroke="#5c5c60" stroke-width="1" fill="none"/>
<path d="M713.750 277V398" stroke="#77777b" stroke-width="1.800" fill="none"/>
<path d="M469 319H506.5V376H469Z" stroke="#77777b" stroke-width="1.800" fill="none"/>
<path d="M470.5 329.8L505.0 364.2M505.0 329.8L470.5 364.2" stroke="#5c5c60" stroke-width="1" fill="none"/>
<path d="M595 317.5H670V378H595Z" stroke="#77777b" stroke-width="1.800" fill="none"/>
<path d="M596.5 330.2L631.0 364.8M631.0 330.2L596.5 364.8" stroke="#5c5c60" stroke-width="1" fill="none"/>
<path d="M634.0 330.2L668.5 364.8M668.5 330.2L634.0 364.8" stroke="#5c5c60" stroke-width="1" fill="none"/>
<path d="M466.500 376V398.500H714" stroke="#77777b" stroke-width="1.800" fill="none"/>
<path d="M509 369.500H549" stroke="#77777b" stroke-width="1.800" fill="none"/>
<path d="M553 369.500H592" stroke="#77777b" stroke-width="1.800" fill="none"/>
<path d="M509 367.500H549" stroke="#5c5c60" stroke-width="1" fill="none"/>
<path d="M553 367.500H592" stroke="#5c5c60" stroke-width="1" fill="none"/>
<path d="M497.0 372.0L522.0 397.0M522.0 372.0L497.0 397.0" stroke="#5c5c60" stroke-width="1" fill="none"/>
<path d="M578.0 371.0L605.0 398.0M605.0 371.0L578.0 398.0" stroke="#5c5c60" stroke-width="1" fill="none"/>
<path d="M661.0 371.5L687.0 397.5M687.0 371.5L661.0 397.5" stroke="#5c5c60" stroke-width="1" fill="none"/>
<path d="M673 369.500H713" stroke="#77777b" stroke-width="1.800" fill="none"/>
<path d="M673 367.500H713" stroke="#5c5c60" stroke-width="1" fill="none"/>
<path d="M468 212V271" stroke="#6a6a6e" stroke-width="2.600" fill="none"/>
<path d="M458.800 271V318.500" stroke="#6a6a6e" stroke-width="2.600" fill="none"/>
<path d="M467.500 319V376" stroke="#6a6a6e" stroke-width="2.600" fill="none"/>
<path d="M478 191H515" stroke="#b0b0b3" stroke-width="1.400" stroke-dasharray="2 1.500" fill="none"/>
<path d="M585 191H622" stroke="#b0b0b3" stroke-width="1.400" stroke-dasharray="2 1.500" fill="none"/>
<path d="M643 191H680" stroke="#b0b0b3" stroke-width="1.400" stroke-dasharray="2 1.500" fill="none"/>
<path d="M489 271a8 8 0 0 1 8-8" stroke="#5c5c60" stroke-width="1" fill="none"/>
<path d="M500 251a7 7 0 0 1 8 8" stroke="#5c5c60" stroke-width="1" fill="none"/>
<path d="M528 275a9 9 0 0 0 9 9" stroke="#5c5c60" stroke-width="1" fill="none"/>
<path d="M563 275a9 9 0 0 0 9 9" stroke="#5c5c60" stroke-width="1" fill="none"/>
<path d="M580 284a8 8 0 0 1 8 8" stroke="#5c5c60" stroke-width="1" fill="none"/>
<path d="M684 284a8 8 0 0 0-8 8" stroke="#5c5c60" stroke-width="1" fill="none"/>
<path d="M602 285a7 7 0 0 0 7-7" stroke="#5c5c60" stroke-width="1" fill="none"/>
<path d="M663 285a7 7 0 0 1-7-7" stroke="#5c5c60" stroke-width="1" fill="none"/>
<path d="M612 311a5 5 0 0 1 10 0" stroke="#5c5c60" stroke-width="1" fill="none"/>
<path d="M642 311a5 5 0 0 1 10 0" stroke="#5c5c60" stroke-width="1" fill="none"/>
<path d="M597 328a7 7 0 0 0 6-7" stroke="#5c5c60" stroke-width="1" fill="none"/>
<path d="M668 328a7 7 0 0 1-6-7" stroke="#5c5c60" stroke-width="1" fill="none"/>
<path d="M476 290a6 6 0 0 0 6 6" stroke="#5c5c60" stroke-width="1" fill="none"/>
<path d="M486 311a6 6 0 0 1 6-6" stroke="#5c5c60" stroke-width="1" fill="none"/></g>
<rect x="703" y="225" width="22" height="27.500" fill="#fff" stroke="#7d7d80" stroke-width="1.600"/><rect x="706" y="227.500" width="16" height="22.500" fill="#fff" stroke="#8d8d90" stroke-width=".9"/><path d="M702 270h23v4h-23z" fill="#fff" stroke="#7d7d80" stroke-width="1.200"/>
<path d="M738 411v-4a3 3 0 0 1 6 0v4z" fill="#c8c8ca"/>
<path d="M842 411v-4a3 3 0 0 1 6 0v4z" fill="#c8c8ca"/>
<path d="M938 411v-4a3 3 0 0 1 6 0v4z" fill="#c8c8ca"/>
<path d="M945 180h8v3l-3 2v5h-2v-5l-3-2z" fill="#d0d0d2"/>
<path d="M982 256l6-3h4v6h-4z" fill="#cfcfd1"/>
<path d="M982 359l6-3h4v6h-4z" fill="#cfcfd1"/>
<circle cx="677" cy="429" r="11.500" fill="none" stroke="#1a1a1a" stroke-width="1.300"/>
<path d="M666 428.500H746" stroke="#1a1a1a" stroke-width="1.200"/><rect x="653" y="431.500" width="42" height="5.500" fill="#fff"/>
<text x="675.300" y="425.500" font-size="5" font-weight="bold" fill="#111" stroke="#111" stroke-width=".4" font-family="Liberation Sans,sans-serif">1</text>
<text x="694" y="425" font-size="4.500" font-weight="bold" fill="#111" stroke="#111" stroke-width=".3" font-family="Liberation Sans,sans-serif">LV1</text>
<text x="653" y="436.300" font-size="4.800" font-weight="bold" fill="#111" stroke="#111" stroke-width=".35" font-family="Liberation Sans,sans-serif" textLength="52" lengthAdjust="spacingAndGlyphs">ApartmentBuilding - Sc 1:100</text>
<text x="1000" y="625.500" text-anchor="end" font-size="5.600" fill="#444" font-family="Liberation Sans,sans-serif" textLength="127" lengthAdjust="spacingAndGlyphs">CONTRACT DOCUMENTS 8 FOR CONSTRUCTION</text>
<text x="1000" y="632" text-anchor="end" font-size="5.600" fill="#444" font-family="Liberation Sans,sans-serif" textLength="151" lengthAdjust="spacingAndGlyphs">PERFORMANCE SPECIFICATION – DEFERRED APPROVAL</text>
<path d="M401.500 572L428 635M419 598v20" stroke="#333" stroke-width="1" fill="none"/><path d="M418.500 600v16" stroke="#111" stroke-width="2"/>
<path d="M402 626h8v9M414 627l8 8M422 627l-8 8M403 603l4 5 4-5M407 608v7" stroke="#666" stroke-width="1" fill="none"/>
<path d="M401 635.500h28" stroke="#3050c8" stroke-width="1"/>
<path d="M395 335.500h36" stroke="#333" stroke-width="1"/><path d="M396.500 300v70" stroke="#3a6" stroke-width="1" opacity=".6"/>
<path d="M402 344v14l3.500-3 2.500 5.500 2-1-2.500-5.500h4.500z" fill="#fff" stroke="#222" stroke-width="1"/>
<path d="M1008.5 175.5H1060.5" stroke="#151515" stroke-width="1.1"/>
<circle cx="1034.500" cy="188.500" r="9.500" fill="none" stroke="#111" stroke-width="2"/><circle cx="1034.500" cy="188.500" r="6.500" fill="none" stroke="#111" stroke-width="1"/><path d="M1034.500 183l5 8.500h-10z" fill="none" stroke="#111" stroke-width="1.200"/>
<text x="1008.5" y="202.5" font-size="4" font-weight="bold" fill="#151515" stroke="#151515" stroke-width="0.3" font-family="Liberation Sans,sans-serif">Project</text>
<text x="1008.5" y="205.4" font-size="3.5" font-weight="bold" fill="#151515" stroke="#151515" stroke-width="0.3" font-family="Liberation Sans,sans-serif">Name</text>
<text x="1008.5" y="208.3" font-size="3.5" font-weight="bold" fill="#151515" stroke="#151515" stroke-width="0.3" font-family="Liberation Sans,sans-serif">APT</text>
<text x="1008.5" y="211.2" font-size="3.6" font-weight="bold" fill="#151515" stroke="#151515" stroke-width="0.3" font-family="Liberation Sans,sans-serif" textLength="16" lengthAdjust="spacingAndGlyphs">No. 12-1248</text>
<text x="1008.5" y="218.5" font-size="3.5" font-weight="normal" fill="#151515" stroke="#151515" stroke-width="0.12" font-family="Liberation Sans,sans-serif">Prepared for</text>
<text x="1008.5" y="221.45" font-size="4" font-weight="normal" fill="#151515" stroke="#151515" stroke-width="0.12" font-family="Liberation Sans,sans-serif">CSW</text>
<text x="1008.5" y="224.4" font-size="3.5" font-weight="bold" fill="#151515" stroke="#151515" stroke-width="0.3" font-family="Liberation Sans,sans-serif" textLength="24" lengthAdjust="spacingAndGlyphs">123 Street Blvd #100</text>
<text x="1008.5" y="227.35" font-size="3.5" font-weight="bold" fill="#151515" stroke="#151515" stroke-width="0.3" font-family="Liberation Sans,sans-serif" textLength="17" lengthAdjust="spacingAndGlyphs">City, State ZIP</text>
<text x="1008.5" y="230.3" font-size="3.5" font-weight="bold" fill="#151515" stroke="#151515" stroke-width="0.3" font-family="Liberation Sans,sans-serif" textLength="16" lengthAdjust="spacingAndGlyphs">555-555-5555</text>
<text x="1008.5" y="233.25" font-size="3.3" font-weight="normal" fill="#151515" stroke="#151515" stroke-width="0.12" font-family="Liberation Sans,sans-serif">office@csw</text>
<text x="1008.5" y="240.5" font-size="4.8" font-weight="bold" fill="#151515" stroke="#151515" stroke-width="0.3" font-family="Liberation Sans,sans-serif" textLength="16" lengthAdjust="spacingAndGlyphs">Company</text>
<text x="1008.5" y="244.5" font-size="3.5" font-weight="bold" fill="#151515" stroke="#151515" stroke-width="0.3" font-family="Liberation Sans,sans-serif">DS Solid B</text>
<text x="1008.5" y="247.6" font-size="3.5" font-weight="bold" fill="#151515" stroke="#151515" stroke-width="0.3" font-family="Liberation Sans,sans-serif">456 Ave Suite</text>
<text x="1008.5" y="250.7" font-size="3.5" font-weight="bold" fill="#151515" stroke="#151515" stroke-width="0.3" font-family="Liberation Sans,sans-serif">City, State ZIP</text>
<text x="1008.5" y="253.8" font-size="3.5" font-weight="bold" fill="#151515" stroke="#151515" stroke-width="0.3" font-family="Liberation Sans,sans-serif" textLength="16" lengthAdjust="spacingAndGlyphs">555-555-0101</text>
<text x="1008.5" y="257.3" font-size="3.3" font-weight="bold" fill="#151515" stroke="#151515" stroke-width="0.3" font-family="Liberation Sans,sans-serif" textLength="30" lengthAdjust="spacingAndGlyphs">Consultants  - - - - - - - - - -</text>
<path d="M1008.5 258.8H1060.5" stroke="#151515" stroke-width="0.8"/>
<rect x="1005" y="261" width="2.500" height="2.500" fill="#111"/>
<rect x="1009" y="261.200" width="48" height="7" fill="#fff" stroke="#111" stroke-width=".9"/>
<text x="1010" y="272" font-size="3.1" font-weight="bold" fill="#151515" stroke="#151515" stroke-width="0.3" font-family="Liberation Sans,sans-serif" textLength="30" lengthAdjust="spacingAndGlyphs">STRUCTURAL ENGINEERS</text>
<text x="1010" y="275" font-size="3.1" font-weight="bold" fill="#151515" stroke="#151515" stroke-width="0.3" font-family="Liberation Sans,sans-serif" textLength="24" lengthAdjust="spacingAndGlyphs">789 Road Suite 200</text>
<text x="1010" y="278" font-size="3.1" font-weight="bold" fill="#151515" stroke="#151515" stroke-width="0.3" font-family="Liberation Sans,sans-serif" textLength="20" lengthAdjust="spacingAndGlyphs">City, State ZIP</text>
<text x="1010" y="281" font-size="3.1" font-weight="bold" fill="#151515" stroke="#151515" stroke-width="0.3" font-family="Liberation Sans,sans-serif" textLength="18" lengthAdjust="spacingAndGlyphs">555-555-0000</text>
<rect x="1005" y="286" width="2.500" height="2.500" fill="#111"/>
<rect x="1009.500" y="286" width="11" height="12.500" fill="#fff" stroke="#111" stroke-width=".9"/>
<text x="1023" y="288.8" font-size="3.1" font-weight="bold" fill="#151515" stroke="#151515" stroke-width="0.3" font-family="Liberation Sans,sans-serif" textLength="22" lengthAdjust="spacingAndGlyphs">MEP ENGINEERS</text>
<text x="1023" y="292.0" font-size="3.1" font-weight="bold" fill="#151515" stroke="#151515" stroke-width="0.3" font-family="Liberation Sans,sans-serif" textLength="26" lengthAdjust="spacingAndGlyphs">321 Lane Suite 5</text>
<text x="1023" y="295.2" font-size="3.1" font-weight="bold" fill="#151515" stroke="#151515" stroke-width="0.3" font-family="Liberation Sans,sans-serif" textLength="22" lengthAdjust="spacingAndGlyphs">City, State ZIP</text>
<text x="1023" y="298.40000000000003" font-size="3.1" font-weight="bold" fill="#151515" stroke="#151515" stroke-width="0.3" font-family="Liberation Sans,sans-serif" textLength="26" lengthAdjust="spacingAndGlyphs">555-555-1111</text>
<path d="M1009 301H1060.5" stroke="#151515" stroke-width="1"/>
<rect x="1005" y="307" width="2.500" height="2.500" fill="#111"/>
<text x="1009" y="309.6" font-size="3.1" font-weight="bold" fill="#151515" stroke="#151515" stroke-width="0.3" font-family="Liberation Sans,sans-serif" textLength="31.3" lengthAdjust="spacingAndGlyphs">Architect of Record</text>
<text x="1009" y="312.7" font-size="3.1" font-weight="bold" fill="#151515" stroke="#151515" stroke-width="0.3" font-family="Liberation Sans,sans-serif" textLength="21.4" lengthAdjust="spacingAndGlyphs">Firm Name LLP</text>
<text x="1009" y="315.8" font-size="3.1" font-weight="bold" fill="#151515" stroke="#151515" stroke-width="0.3" font-family="Liberation Sans,sans-serif" textLength="19.8" lengthAdjust="spacingAndGlyphs">Address Line</text>
<rect x="1005" y="319" width="2.500" height="2.500" fill="#111"/>
<text x="1009" y="321.6" font-size="3.1" font-weight="bold" fill="#151515" stroke="#151515" stroke-width="0.3" font-family="Liberation Sans,sans-serif" textLength="8.2" lengthAdjust="spacingAndGlyphs">Civil</text>
<text x="1009" y="324.7" font-size="3.1" font-weight="bold" fill="#151515" stroke="#151515" stroke-width="0.3" font-family="Liberation Sans,sans-serif" textLength="44" lengthAdjust="spacingAndGlyphs">Engineering Group Consulting LLC</text>
<text x="1009" y="327.8" font-size="3.1" font-weight="bold" fill="#151515" stroke="#151515" stroke-width="0.3" font-family="Liberation Sans,sans-serif" textLength="19.8" lengthAdjust="spacingAndGlyphs">Address Line</text>
<rect x="1005" y="331.5" width="2.500" height="2.500" fill="#111"/>
<text x="1009" y="334.1" font-size="3.1" font-weight="bold" fill="#151515" stroke="#151515" stroke-width="0.3" font-family="Liberation Sans,sans-serif" textLength="31.3" lengthAdjust="spacingAndGlyphs">Landscape Architect</text>
<text x="1009" y="337.2" font-size="3.1" font-weight="bold" fill="#151515" stroke="#151515" stroke-width="0.3" font-family="Liberation Sans,sans-serif" textLength="18.1" lengthAdjust="spacingAndGlyphs">Studio Name</text>
<text x="1009" y="340.3" font-size="3.1" font-weight="bold" fill="#151515" stroke="#151515" stroke-width="0.3" font-family="Liberation Sans,sans-serif" textLength="19.8" lengthAdjust="spacingAndGlyphs">Address Line</text>
<rect x="1005" y="343.6" width="2.500" height="2.500" fill="#111"/>
<text x="1009" y="346.2" font-size="3.1" font-weight="bold" fill="#151515" stroke="#151515" stroke-width="0.3" font-family="Liberation Sans,sans-serif" textLength="24.8" lengthAdjust="spacingAndGlyphs">Interior Design</text>
<text x="1009" y="349.3" font-size="3.1" font-weight="bold" fill="#151515" stroke="#151515" stroke-width="0.3" font-family="Liberation Sans,sans-serif" textLength="31.3" lengthAdjust="spacingAndGlyphs">Design Company Name</text>
<text x="1009" y="352.4" font-size="3.1" font-weight="bold" fill="#151515" stroke="#151515" stroke-width="0.3" font-family="Liberation Sans,sans-serif" textLength="28.0" lengthAdjust="spacingAndGlyphs">Address Line City</text>
<rect x="1005" y="355.7" width="2.500" height="2.500" fill="#111"/>
<text x="1009" y="358.3" font-size="3.1" font-weight="bold" fill="#151515" stroke="#151515" stroke-width="0.3" font-family="Liberation Sans,sans-serif" textLength="44" lengthAdjust="spacingAndGlyphs">Lighting Design and Consulting</text>
<text x="1009" y="361.4" font-size="3.1" font-weight="bold" fill="#151515" stroke="#151515" stroke-width="0.3" font-family="Liberation Sans,sans-serif" textLength="9.9" lengthAdjust="spacingAndGlyphs">Studio</text>
<text x="1009" y="364.5" font-size="3.1" font-weight="bold" fill="#151515" stroke="#151515" stroke-width="0.3" font-family="Liberation Sans,sans-serif" textLength="19.8" lengthAdjust="spacingAndGlyphs">Address Line</text>
<rect x="1005" y="367.8" width="2.500" height="2.500" fill="#111"/>
<text x="1009" y="370.4" font-size="3.1" font-weight="bold" fill="#151515" stroke="#151515" stroke-width="0.3" font-family="Liberation Sans,sans-serif" textLength="13.2" lengthAdjust="spacingAndGlyphs">Acoustic</text>
<text x="1009" y="373.5" font-size="3.1" font-weight="bold" fill="#151515" stroke="#151515" stroke-width="0.3" font-family="Liberation Sans,sans-serif" textLength="16.5" lengthAdjust="spacingAndGlyphs">Consultant</text>
<text x="1009" y="376.6" font-size="3.1" font-weight="bold" fill="#151515" stroke="#151515" stroke-width="0.3" font-family="Liberation Sans,sans-serif" textLength="19.8" lengthAdjust="spacingAndGlyphs">Address Line</text>
<rect x="1005" y="379.5" width="2.500" height="2.500" fill="#111"/>
<text x="1009" y="382.1" font-size="3.1" font-weight="bold" fill="#151515" stroke="#151515" stroke-width="0.3" font-family="Liberation Sans,sans-serif" textLength="11.5" lengthAdjust="spacingAndGlyphs">Signage</text>
<text x="1009" y="385.2" font-size="3.1" font-weight="bold" fill="#151515" stroke="#151515" stroke-width="0.3" font-family="Liberation Sans,sans-serif" textLength="21.4" lengthAdjust="spacingAndGlyphs">Graphics Firm</text>
<text x="1009" y="388.3" font-size="3.1" font-weight="bold" fill="#151515" stroke="#151515" stroke-width="0.3" font-family="Liberation Sans,sans-serif" textLength="11.5" lengthAdjust="spacingAndGlyphs">Address</text>
<text x="1008.5" y="393.3" font-size="3.1" font-weight="bold" fill="#151515" stroke="#151515" stroke-width="0.3" font-family="Liberation Sans,sans-serif">Key Plan</text>
<path d="M1008.5 394.8H1060.5" stroke="#151515" stroke-width="0.8"/>
<circle cx="1017.500" cy="407.400" r="4.300" fill="none" stroke="#111" stroke-width="1.200"/><path d="M1017.500 401v13M1012 407.400h11" stroke="#111" stroke-width="1.100"/>
<text x="1009" y="432" font-size="3.2" font-weight="bold" fill="#151515" stroke="#151515" stroke-width="0.3" font-family="Liberation Sans,sans-serif" textLength="14" lengthAdjust="spacingAndGlyphs">Issued / Revisions</text>
<path d="M1008.5 433H1060.5" stroke="#151515" stroke-width="0.8"/>
<text x="1010" y="464" font-size="3" font-weight="bold" fill="#151515" stroke="#151515" stroke-width="0.3" font-family="Liberation Sans,sans-serif" textLength="24" lengthAdjust="spacingAndGlyphs">No.   Description</text>
<text x="1048" y="464" font-size="3" font-weight="bold" fill="#151515" stroke="#151515" stroke-width="0.3" font-family="Liberation Sans,sans-serif" textLength="10" lengthAdjust="spacingAndGlyphs">Date</text>
<path d="M1008.5 465.2H1060.5" stroke="#151515" stroke-width="1.6"/>
<path d="M1008.500 467.8H1060.500" stroke="#8a8a8a" stroke-width=".6"/>
<path d="M1008.500 470.4H1060.500" stroke="#8a8a8a" stroke-width=".6"/>
<path d="M1008.500 472.9H1060.500" stroke="#8a8a8a" stroke-width=".6"/>
<path d="M1008.500 475.4H1060.500" stroke="#8a8a8a" stroke-width=".6"/>
<path d="M1008.500 478.0H1060.500" stroke="#8a8a8a" stroke-width=".6"/>
<path d="M1008.500 480.6H1060.500" stroke="#8a8a8a" stroke-width=".6"/>
<path d="M1008.500 483.1H1060.500" stroke="#8a8a8a" stroke-width=".6"/>
<path d="M1008.500 485.7H1060.500" stroke="#8a8a8a" stroke-width=".6"/>
<path d="M1008.500 488.2H1060.500" stroke="#8a8a8a" stroke-width=".6"/>
<path d="M1008.500 490.8H1060.500" stroke="#8a8a8a" stroke-width=".6"/>
<rect x="1009" y="495.500" width="51" height="16" fill="#fff" stroke="#111" stroke-width="1"/>
<path d="M1008.5 515H1060.5" stroke="#151515" stroke-width="1.1"/>
<path d="M1008.5 517.5H1060.5" stroke="#151515" stroke-width="0.6"/>
<text x="1009" y="519.5" font-size="3" font-weight="bold" fill="#151515" stroke="#151515" stroke-width="0.3" font-family="Liberation Sans,sans-serif" textLength="18" lengthAdjust="spacingAndGlyphs">Submittal Package</text>
<text x="1040" y="519.5" font-size="3" font-weight="bold" fill="#151515" stroke="#151515" stroke-width="0.3" font-family="Liberation Sans,sans-serif" textLength="6" lengthAdjust="spacingAndGlyphs">100%</text>
<text x="1009" y="523.5" font-size="3.2" font-weight="bold" fill="#151515" stroke="#151515" stroke-width="0.3" font-family="Liberation Sans,sans-serif" textLength="14" lengthAdjust="spacingAndGlyphs">Designed By</text>
<text x="1030" y="523.5" font-size="3" font-weight="normal" fill="#151515" stroke="#151515" stroke-width="0.12" font-family="Liberation Sans,sans-serif" textLength="6" lengthAdjust="spacingAndGlyphs">Date</text>
<text x="1046" y="523.5" font-size="3.2" font-weight="bold" fill="#151515" stroke="#151515" stroke-width="0.3" font-family="Liberation Sans,sans-serif" textLength="13" lengthAdjust="spacingAndGlyphs">A. Smith</text>
<path d="M1008.5 524.5H1060.5" stroke="#151515" stroke-width="0.5"/>
<text x="1009" y="527.9" font-size="3.2" font-weight="bold" fill="#151515" stroke="#151515" stroke-width="0.3" font-family="Liberation Sans,sans-serif" textLength="14" lengthAdjust="spacingAndGlyphs">Drawn By</text>
<text x="1030" y="527.9" font-size="3" font-weight="normal" fill="#151515" stroke="#151515" stroke-width="0.12" font-family="Liberation Sans,sans-serif" textLength="6" lengthAdjust="spacingAndGlyphs">Date</text>
<text x="1046" y="527.9" font-size="3.2" font-weight="bold" fill="#151515" stroke="#151515" stroke-width="0.3" font-family="Liberation Sans,sans-serif" textLength="13" lengthAdjust="spacingAndGlyphs">B. Jones</text>
<path d="M1008.5 528.9H1060.5" stroke="#151515" stroke-width="0.5"/>
<text x="1009" y="532.3" font-size="3.2" font-weight="bold" fill="#151515" stroke="#151515" stroke-width="0.3" font-family="Liberation Sans,sans-serif" textLength="14" lengthAdjust="spacingAndGlyphs">Checked By</text>
<text x="1030" y="532.3" font-size="3" font-weight="normal" fill="#151515" stroke="#151515" stroke-width="0.12" font-family="Liberation Sans,sans-serif" textLength="6" lengthAdjust="spacingAndGlyphs">Date</text>
<text x="1046" y="532.3" font-size="3.2" font-weight="bold" fill="#151515" stroke="#151515" stroke-width="0.3" font-family="Liberation Sans,sans-serif" textLength="13" lengthAdjust="spacingAndGlyphs">C. Brown</text>
<path d="M1008.5 533.3H1060.5" stroke="#151515" stroke-width="0.5"/>
<text x="1009" y="536.7" font-size="3.2" font-weight="bold" fill="#151515" stroke="#151515" stroke-width="0.3" font-family="Liberation Sans,sans-serif" textLength="14" lengthAdjust="spacingAndGlyphs">Approved By</text>
<text x="1030" y="536.7" font-size="3" font-weight="normal" fill="#151515" stroke="#151515" stroke-width="0.12" font-family="Liberation Sans,sans-serif" textLength="6" lengthAdjust="spacingAndGlyphs">Date</text>
<text x="1046" y="536.7" font-size="3.2" font-weight="bold" fill="#151515" stroke="#151515" stroke-width="0.3" font-family="Liberation Sans,sans-serif" textLength="13" lengthAdjust="spacingAndGlyphs">D. White</text>
<path d="M1008.5 537.7H1060.5" stroke="#151515" stroke-width="0.5"/>
<text x="1009" y="541.1" font-size="3.2" font-weight="bold" fill="#151515" stroke="#151515" stroke-width="0.3" font-family="Liberation Sans,sans-serif" textLength="14" lengthAdjust="spacingAndGlyphs">Issued For</text>
<text x="1030" y="541.1" font-size="3" font-weight="normal" fill="#151515" stroke="#151515" stroke-width="0.12" font-family="Liberation Sans,sans-serif" textLength="6" lengthAdjust="spacingAndGlyphs">Date</text>
<text x="1046" y="541.1" font-size="3.2" font-weight="bold" fill="#151515" stroke="#151515" stroke-width="0.3" font-family="Liberation Sans,sans-serif" textLength="13" lengthAdjust="spacingAndGlyphs">Permit</text>
<path d="M1008.5 542.1H1060.5" stroke="#151515" stroke-width="0.5"/>
<path d="M1008.5 547.5H1060.5" stroke="#151515" stroke-width="1.1"/>
<text x="1017" y="551.5" font-size="3.2" font-weight="bold" fill="#151515" stroke="#151515" stroke-width="0.3" font-family="Liberation Sans,sans-serif" textLength="30" lengthAdjust="spacingAndGlyphs">NOT FOR CONSTRUCTION</text>
<text x="1013" y="555.5" font-size="3.2" font-weight="bold" fill="#151515" stroke="#151515" stroke-width="0.3" font-family="Liberation Sans,sans-serif" textLength="38" lengthAdjust="spacingAndGlyphs">PROPERTY OF THE ARCHITECT</text>
<text x="1013" y="563" font-size="3.2" font-weight="bold" fill="#151515" stroke="#151515" stroke-width="0.3" font-family="Liberation Sans,sans-serif">Seal</text>
<path d="M1008.5 570.5H1018" stroke="#151515" stroke-width="0.7"/>
<path d="M1026 570.5H1036" stroke="#151515" stroke-width="0.7"/>
<path d="M1048 570.5H1058" stroke="#151515" stroke-width="0.7"/>
<text x="1008.5" y="579" font-size="5.4" font-weight="bold" fill="#151515" stroke="#151515" stroke-width="0.3" font-family="Liberation Sans,sans-serif" textLength="58" lengthAdjust="spacingAndGlyphs">APARTMENTBUILDING</text>
<text x="1008.5" y="586" font-size="5.4" font-weight="bold" fill="#151515" stroke="#151515" stroke-width="0.3" font-family="Liberation Sans,sans-serif" textLength="23" lengthAdjust="spacingAndGlyphs">- SHEET1</text>
<text x="1008.5" y="606.5" font-size="3" font-weight="bold" fill="#151515" stroke="#151515" stroke-width="0.3" font-family="Liberation Sans,sans-serif" textLength="50" lengthAdjust="spacingAndGlyphs">Sheet number and date - 2025</text>
<path d="M1008.5 608.5H1060.5" stroke="#151515" stroke-width="0.9"/>
<text x="1009" y="613.5" font-size="4" font-weight="bold" fill="#151515" stroke="#151515" stroke-width="0.3" font-family="Liberation Sans,sans-serif">A101</text>
<path d="M1008.5 618H1060.5" stroke="#151515" stroke-width="1"/>
</svg>
<div class="a" style="left:1080px;top:113px;width:286px;height:562px;background:#313236;"></div>
<div class="a" style="left:1080px;top:113px;width:286px;height:1px;background:#202124;"></div>
<div class="a" style="left:1366px;top:113px;width:17px;height:562px;background:#212226;"></div>
<div class="a" style="left:1383px;top:113px;width:2px;height:562px;background:#18191b;"></div>
<div class="a" style="left:1385px;top:113px;width:15px;height:562px;background:#2d2e32;"></div>
<div class="a" style="left:1080px;top:675px;width:320px;height:2px;background:#1a1b1e;"></div>
<div class="a" style="left:1385px;top:244px;width:15px;height:55px;background:#222327;"></div>
<div class="a" style="left:1385px;top:148px;width:15px;height:1px;background:#1a1b1e;"></div>
<div class="a" style="left:1385px;top:244px;width:15px;height:1px;background:#1a1b1e;"></div>
<div class="a" style="left:1385px;top:299px;width:15px;height:1px;background:#1a1b1e;"></div>
<div class="a" style="left:1385px;top:405px;width:15px;height:1px;background:#1a1b1e;"></div>
<div class="a" style="left:1385px;top:490px;width:15px;height:1px;background:#1a1b1e;"></div>
<div class="a" style="left:1385px;top:549px;width:15px;height:1px;background:#1a1b1e;"></div>
<div class="t" style="left:1392px;top:132px;transform-origin:50% 50%;transform:translate(-50%,-50%) rotate(-90deg) scaleX(0.9);font-size:9.5px;color:#cfcfd2">Home</div>
<div class="t" style="left:1392px;top:198px;transform-origin:50% 50%;transform:translate(-50%,-50%) rotate(-90deg) scaleX(0.9);font-size:9.5px;color:#cfcfd2">Sheet Set Manager</div>
<div class="t" style="left:1392px;top:272px;transform-origin:50% 50%;transform:translate(-50%,-50%) rotate(-90deg) scaleX(0.9);font-size:9.5px;color:#cfcfd2">Properties</div>
<div class="t" style="left:1392px;top:353px;transform-origin:50% 50%;transform:translate(-50%,-50%) rotate(-90deg) scaleX(0.9);font-size:9.5px;color:#cfcfd2">Visual Styles Manager</div>
<div class="t" style="left:1392px;top:448px;transform-origin:50% 50%;transform:translate(-50%,-50%) rotate(-90deg) scaleX(0.9);font-size:9.5px;color:#cfcfd2">Design Resources</div>
<div class="t" style="left:1392px;top:520px;transform-origin:50% 50%;transform:translate(-50%,-50%) rotate(-90deg) scaleX(0.9);font-size:9.5px;color:#cfcfd2">References</div>
<div class="t" style="left:1375px;top:631.8px;transform-origin:50% 50%;transform:translate(-50%,-50%) rotate(-90deg) scaleX(0.98);font-size:9.5px;font-weight:bold;color:#f0f0f2">Properties</div>
<svg style="left:1369px;top:115px" width="12" height="30" viewBox="0 0 12 30"><path d="M3 3l5 5M8 3l-5 5" stroke="#f0f0f0" stroke-width="1.400" fill="none"/><path class="icf" d="M3.500 17h5v1.200h-1v3.300l1.500 1.500v.8H6.400v3.200h-.8v-3.200H3v-.8l1.500-1.500v-3.300h-1z"/></svg>
<svg style="left:1370px;top:661px" width="12" height="12" viewBox="0 0 12 12"><path class="icf" d="M1 1h2.500v3H1zM4.700 1h2.500v3H4.700zM8.400 1h2.500v3H8.400z"/><path class="ic dim" stroke-width=".8" d="M1 6.500h2.500M4.700 6.500h2.500M8.400 6.500h2.500M1 9h2.500M4.700 9h2.500M8.400 9h2.500M1 11h10"/></svg>
<div class="a" style="left:1087px;top:121px;width:271px;height:14px;background:#111214;"></div>
<div class="t" style="left:1089px;top:123px;font-size:9.5px;color:#e8e8ea">No Selection</div>
<div class="arr" style="left:1348px;top:127px;transform:scale(.8)"></div>
<div class="a" style="left:1088px;top:141px;width:19.5px;height:18.5px;background:#333438;border:1px solid #3f4044"></div>
<div class="a" style="left:1112px;top:141px;width:19.5px;height:18.5px;background:#333438;border:1px solid #3f4044"></div>
<div class="a" style="left:1136.5px;top:141px;width:19.5px;height:18.5px;background:#333438;border:1px solid #3f4044"></div>
<div class="a" style="left:1160.5px;top:141px;width:19.5px;height:18.5px;background:#333438;border:1px solid #3f4044"></div>
<div class="a" style="left:1184.5px;top:141px;width:19.5px;height:18.5px;background:#333438;border:1px solid #3f4044"></div>
<svg style="left:1090px;top:142px" width="16" height="16" viewBox="0 0 16 16"><path class="ic" stroke-dasharray="2.500 1.500" d="M2 2h12v12H2z"/><path class="ic dim" d="M4 12v-4h6v4M5.500 12v-2h3v2"/></svg>
<svg style="left:1114px;top:142px" width="16" height="16" viewBox="0 0 16 16"><path class="ic dim" d="M2 3v10M4 3v10"/><path class="ic" d="M7 3v9l2.500-2 1.500 3.500 1.300-.6-1.500-3.400h3z"/></svg>
<svg style="left:1138.500px;top:142px" width="16" height="16" viewBox="0 0 16 16"><path class="ic" stroke-dasharray="2.500 1.500" d="M2 2h12v12H2z"/><path class="ic" d="M7 4v8l2.200-1.800 1.300 3 1.200-.5-1.300-3h2.600z"/></svg>
<svg style="left:1162.500px;top:142px" width="16" height="16" viewBox="0 0 16 16"><path class="ic dim" d="M2 3h3M7 3h6M2 6h3M7 6h4M2 9h3"/><path class="ic" d="M11 6.500l-3 4h2.500l-1.500 4 4.500-5.500h-2.500l1.500-2.500z"/></svg>
<div class="t" style="left:1191px;top:144px;font-size:12px;font-weight:bold;color:#f0f0f2;transform:scaleX(0.95)">?</div>
<div class="a" style="left:1088px;top:164px;width:251px;height:13px;background:#1b1c1f;"></div>
<div class="t" style="left:1091px;top:165.5px;font-size:9.5px;font-weight:bold;color:#f0f0f2;transform:scaleX(0.95)">General</div>
<div class="a" style="left:1326px;top:168px;width:0;height:0;border-left:4px solid transparent;border-right:4px solid transparent;border-bottom:5px solid #f0f0f2"></div>
<div class="a" style="left:1088px;top:177px;width:251px;height:149px;background:#35363a;border:1px solid #292a2e;border-top:none"></div>
<div class="a" style="left:1089px;top:182px;width:249px;height:1px;background:#303135;"></div>
<div class="t" style="left:1116.5px;top:191px;font-size:9.5px;color:#e4e4e6">Hyperlink</div>
<div class="a" style="left:1227px;top:186.5px;width:112px;height:19px;background:#17181a;"></div>
<div class="t" style="left:1229.5px;top:191px;font-size:9.5px;color:#e8e8ea"></div>
<div class="t" style="left:1116.5px;top:209px;font-size:9.5px;color:#e4e4e6">Layer</div>
<div class="a" style="left:1227px;top:206.5px;width:112px;height:15px;background:#17181a;"></div>
<div class="t" style="left:1229.5px;top:209px;font-size:9.5px;color:#e8e8ea">0</div>
<div class="arr" style="left:1328px;top:213px;transform:scale(.95);"></div>
<div class="t" style="left:1116.5px;top:226px;font-size:9.5px;color:#e4e4e6">LineColor</div>
<div class="a" style="left:1227px;top:223.5px;width:112px;height:15px;background:#17181a;"></div>
<div class="t" style="left:1229.5px;top:226px;font-size:9.5px;color:#e8e8ea"><span style="display:inline-block;width:6px;height:6px;border-radius:3px;background:#fff;margin:0 5px 0 3px;vertical-align:0"></span>ByLayer</div>
<div class="arr" style="left:1328px;top:230px;transform:scale(.95);"></div>
<div class="t" style="left:1116.5px;top:243.5px;font-size:9.5px;color:#e4e4e6">LineScale</div>
<div class="a" style="left:1227px;top:241.0px;width:112px;height:15px;background:#17181a;"></div>
<div class="t" style="left:1229.5px;top:243.5px;font-size:9.5px;color:#e8e8ea">1</div>
<div class="t" style="left:1116.5px;top:261.5px;font-size:9.5px;color:#e4e4e6">LineStyle</div>
<div class="a" style="left:1227px;top:259.0px;width:112px;height:15px;background:#17181a;"></div>
<div class="t" style="left:1229.5px;top:261.5px;font-size:9.5px;color:#e8e8ea">ByLayer&nbsp;&nbsp;&nbsp;&nbsp;&nbsp;Solid line</div>
<div class="arr" style="left:1328px;top:265.5px;transform:scale(.95);"></div>
<div class="t" style="left:1116.5px;top:278.5px;font-size:9.5px;color:#e4e4e6">LineWeight</div>
<div class="a" style="left:1227px;top:276.0px;width:112px;height:15px;background:#17181a;"></div>
<div class="t" style="left:1229.5px;top:278.5px;font-size:9.5px;color:#e8e8ea"><span style="display:inline-block;width:24px;height:1px;background:#e0e0e2;margin:0 3px 3px 1px;vertical-align:middle"></span>ByLayer</div>
<div class="arr" style="left:1328px;top:282.5px;transform:scale(.95);"></div>
<div class="t" style="left:1116.5px;top:295.5px;font-size:9.5px;color:#e4e4e6">Transparency</div>
<div class="a" style="left:1227px;top:293.0px;width:112px;height:15px;background:#17181a;"></div>
<div class="t" style="left:1229.5px;top:295.5px;font-size:9.5px;color:#e8e8ea">ByLayer</div>
<div class="arr" style="left:1328px;top:299.5px;transform:scale(.95);"></div>
<div class="t" style="left:1116.5px;top:312px;font-size:9.5px;color:#e4e4e6">PrintStyle</div>
<div class="a" style="left:1227px;top:309.5px;width:112px;height:15px;background:#17181a;border:1px solid #55565a;"></div>
<div class="t" style="left:1229.5px;top:312px;font-size:9.5px;color:#5c5d61">ByColor</div>
<div class="arr" style="left:1328px;top:316px;transform:scale(.95);opacity:.35"></div>
<div class="a" style="left:1088px;top:330.5px;width:251px;height:13px;background:#1b1c1f;"></div>
<div class="t" style="left:1091px;top:332.0px;font-size:9.5px;font-weight:bold;color:#f0f0f2;transform:scaleX(0.95)">PrintStyle</div>
<div class="a" style="left:1326px;top:334.5px;width:0;height:0;border-left:4px solid transparent;border-right:4px solid transparent;border-bottom:5px solid #f0f0f2"></div>
<div class="a" style="left:1088px;top:343.5px;width:251px;height:77.5px;background:#35363a;border:1px solid #292a2e;border-top:none"></div>
<div class="a" style="left:1089px;top:348.5px;width:249px;height:1px;background:#303135;"></div>
<div class="t" style="left:1116.5px;top:355.5px;font-size:9.5px;color:#e4e4e6">Display</div>
<div class="a" style="left:1227px;top:353.0px;width:112px;height:15px;background:#17181a;"></div>
<div class="t" style="left:1229.5px;top:355.5px;font-size:9.5px;color:#e8e8ea">No</div>
<div class="arr" style="left:1328px;top:359.5px;transform:scale(.95);"></div>
<div class="t" style="left:1116.5px;top:372px;font-size:9.5px;color:#e4e4e6">Table</div>
<div class="a" style="left:1227px;top:369.5px;width:112px;height:15px;background:#17181a;"></div>
<div class="t" style="left:1229.5px;top:372px;font-size:9.5px;color:#e8e8ea">monochrome.ctb</div>
<div class="arr" style="left:1328px;top:376px;transform:scale(.95);"></div>
<div class="t" style="left:1116.5px;top:389px;font-size:9.5px;color:#e4e4e6">Style</div>
<div class="a" style="left:1227px;top:386.5px;width:112px;height:15px;background:#17181a;border:1px solid #55565a;"></div>
<div class="t" style="left:1229.5px;top:389px;font-size:9.5px;color:#5c5d61">ByColor</div>
<div class="arr" style="left:1328px;top:393px;transform:scale(.95);opacity:.35"></div>
<div class="t" style="left:1116.5px;top:406.5px;font-size:9.5px;color:#e4e4e6">Type</div>
<div class="a" style="left:1227px;top:403.2px;width:112px;height:16.5px;background:#17181a;"></div>
<div class="t" style="left:1229.5px;top:406.5px;font-size:9.5px;color:#5c5d61">None</div>
<div class="a" style="left:1088px;top:426.5px;width:251px;height:13px;background:#1b1c1f;"></div>
<div class="t" style="left:1091px;top:428.0px;font-size:9.5px;font-weight:bold;color:#f0f0f2;transform:scaleX(0.95)">View</div>
<div class="a" style="left:1326px;top:430.5px;width:0;height:0;border-left:4px solid transparent;border-right:4px solid transparent;border-bottom:5px solid #f0f0f2"></div>
<div class="a" style="left:1088px;top:439.5px;width:251px;height:103.5px;background:#35363a;border:1px solid #292a2e;border-top:none"></div>
<div class="a" style="left:1089px;top:444.5px;width:249px;height:1px;background:#303135;"></div>
<div class="t" style="left:1116.5px;top:452px;font-size:9.5px;color:#e4e4e6">Center X</div>
<div class="a" style="left:1227px;top:448.5px;width:112px;height:17px;background:#17181a;"></div>
<div class="t" style="left:1229.5px;top:452px;font-size:9.5px;color:#5c5d61">297</div>
<div class="t" style="left:1116.5px;top:471px;font-size:9.5px;color:#e4e4e6">Center Y</div>
<div class="a" style="left:1227px;top:467.5px;width:112px;height:17px;background:#17181a;"></div>
<div class="t" style="left:1229.5px;top:471px;font-size:9.5px;color:#5c5d61">210</div>
<div class="t" style="left:1116.5px;top:490px;font-size:9.5px;color:#e4e4e6">Center Z</div>
<div class="a" style="left:1227px;top:486.5px;width:112px;height:17px;background:#17181a;"></div>
<div class="t" style="left:1229.5px;top:490px;font-size:9.5px;color:#5c5d61">0</div>
<div class="t" style="left:1116.5px;top:509px;font-size:9.5px;color:#e4e4e6">Height</div>
<div class="a" style="left:1227px;top:505.5px;width:112px;height:17px;background:#17181a;"></div>
<div class="t" style="left:1229.5px;top:509px;font-size:9.5px;color:#5c5d61">471</div>
<div class="t" style="left:1116.5px;top:528px;font-size:9.5px;color:#e4e4e6">Width</div>
<div class="a" style="left:1227px;top:524.5px;width:112px;height:17px;background:#17181a;"></div>
<div class="t" style="left:1229.5px;top:528px;font-size:9.5px;color:#5c5d61">606</div>
<div class="a" style="left:1088px;top:548px;width:251px;height:13px;background:#1b1c1f;"></div>
<div class="t" style="left:1091px;top:549.5px;font-size:9.5px;font-weight:bold;color:#f0f0f2;transform:scaleX(0.95)">Misc</div>
<div class="a" style="left:1326px;top:552px;width:0;height:0;border-left:4px solid transparent;border-right:4px solid transparent;border-bottom:5px solid #f0f0f2"></div>
<div class="a" style="left:1088px;top:561px;width:251px;height:94.5px;background:#35363a;border:1px solid #292a2e;border-top:none"></div>
<div class="a" style="left:1089px;top:566px;width:249px;height:1px;background:#303135;"></div>
<div class="t" style="left:1116.5px;top:573px;font-size:9.5px;color:#e4e4e6">CCS per viewport</div>
<div class="a" style="left:1227px;top:570.5px;width:112px;height:15px;background:#17181a;"></div>
<div class="t" style="left:1229.5px;top:573px;font-size:9.5px;color:#e8e8ea">Yes</div>
<div class="arr" style="left:1328px;top:577px;transform:scale(.95);"></div>
<div class="t" style="left:1116.5px;top:589.5px;font-size:9.5px;color:#e4e4e6">CS icon at origin</div>
<div class="a" style="left:1227px;top:587.0px;width:112px;height:15px;background:#17181a;"></div>
<div class="t" style="left:1229.5px;top:589.5px;font-size:9.5px;color:#e8e8ea">Yes</div>
<div class="arr" style="left:1328px;top:593.5px;transform:scale(.95);"></div>
<div class="t" style="left:1116.5px;top:606.5px;font-size:9.5px;color:#e4e4e6">CS icon on</div>
<div class="a" style="left:1227px;top:604.0px;width:112px;height:15px;background:#17181a;"></div>
<div class="t" style="left:1229.5px;top:606.5px;font-size:9.5px;color:#e8e8ea">Yes</div>
<div class="arr" style="left:1328px;top:610.5px;transform:scale(.95);"></div>
<div class="t" style="left:1116.5px;top:623.5px;font-size:9.5px;color:#e4e4e6">Annotation Scale</div>
<div class="a" style="left:1227px;top:621.0px;width:112px;height:15px;background:#17181a;border:1px solid #55565a;"></div>
<div class="t" style="left:1229.5px;top:623.5px;font-size:9.5px;color:#5c5d61">1:1</div>
<div class="arr" style="left:1328px;top:627.5px;transform:scale(.95);opacity:.35"></div>
<div class="t" style="left:1116.5px;top:641px;font-size:9.5px;color:#e4e4e6">CCS name</div>
<div class="a" style="left:1227px;top:637.8px;width:112px;height:16.5px;background:#17181a;"></div>
<div class="t" style="left:1229.5px;top:641px;font-size:9.5px;color:#5c5d61"></div>
<svg style="left:1094.0px;top:188.5px" width="15" height="15" viewBox="0 0 14 14"><g transform="rotate(-38 7 7)"><path class="ic" stroke-width="1.300" d="M5.500 4.500h-3a2.500 2.500 0 0 0 0 5h3M8.500 4.500h3a2.500 2.500 0 0 1 0 5h-3M4.500 7h5"/></g></svg>
<svg style="left:1094.5px;top:207.0px" width="14" height="14" viewBox="0 0 14 14"><g opacity=".7"><ellipse class="ic" cx="7" cy="4" rx="4" ry="1.800"/><path class="ic" d="M3 4v6c0 1 1.800 1.800 4 1.800s4-.8 4-1.800V4M3 6.500c0 1 1.800 1.800 4 1.800s4-.8 4-1.800M3 9c0 1 1.800 1.800 4 1.800"/></g></svg>
<svg style="left:1094.5px;top:224.0px" width="14" height="14" viewBox="0 0 14 14"><path class="ic" d="M2 6l4-4 5 5-4 4zM4 4l-1.500-1.500"/><circle class="ic" cx="10.500" cy="10.500" r="2"/></svg>
<svg style="left:1094.5px;top:241.5px" width="14" height="14" viewBox="0 0 14 14"><path class="ic" stroke-width="1.300" stroke-dasharray="3.500 1.500" stroke-linecap="butt" d="M1 3h12"/><path class="ic dim" stroke-dasharray="1.200 1.200" stroke-linecap="butt" d="M1 6h12M1 8.500h12"/><path class="ic" stroke-width="1.200" stroke-dasharray="3.500 1.500" stroke-linecap="butt" d="M1 6h12" opacity=".6"/><path class="ic dim" stroke-width=".8" d="M1 11.500h12"/></svg>
<svg style="left:1094.5px;top:259.5px" width="14" height="14" viewBox="0 0 14 14"><path class="ic" d="M1 3h12"/><path class="ic dim" stroke-dasharray="2 1.200" d="M1 6.500h12M1 9.500h12M1 12h12"/></svg>
<svg style="left:1094.5px;top:276.5px" width="14" height="14" viewBox="0 0 14 14"><path class="icf" d="M1 1.500h12v2.500H1zM1 5.500h12v3H1zM1 10h12v3H1z" opacity=".85"/></svg>
<svg style="left:1094.5px;top:293.5px" width="14" height="14" viewBox="0 0 14 14"><path class="icf" d="M1 1h4v4H1zM9 1h4v4H9zM5 5h4v4H5zM1 9h4v4H1zM9 9h4v4H9z" opacity=".55"/><path class="icf" d="M5 1h4v4H5zM1 5h4v4H1zM9 5h4v4H9zM5 9h4v4H5z" opacity=".9"/></svg>
<svg style="left:1094.5px;top:310.0px" width="14" height="14" viewBox="0 0 14 14"><path class="icf" d="M1.500 1.500h2v11h-2zM5.500 1.500h2v11h-2zM9.500 1.500h1.500v11H9.500z"/><path class="ic" stroke-dasharray="1.500 1" d="M12.500 1.500v11"/></svg>
<svg style="left:1094.0px;top:353.0px" width="15" height="15" viewBox="0 0 14 14"><circle class="ic" cx="7" cy="7" r="5.500"/><path class="ic" d="M1.500 7h11M7 3.500v7M5.500 5l1.500-1.500 1.500 1.500"/></svg>
<svg style="left:1094.5px;top:370.0px" width="14" height="14" viewBox="0 0 14 14"><path class="icf" d="M1 1h7v2.500H1zM9.500 1h3.500v6H9.500zM10 9.500h2.500v3H10z"/><path class="ic dim" d="M1.500 5v8M3.500 5v8M5.500 5v8M7.500 5v8M1 13h7"/></svg>
<svg style="left:1094.5px;top:387.0px" width="14" height="14" viewBox="0 0 14 14"><path class="icf" d="M1.500 1.500h2v11h-2zM5.500 1.500h2v11h-2zM9.500 1.500h1.500v11H9.500z"/><path class="ic" stroke-dasharray="1.500 1" d="M12.500 1.500v11"/></svg>
<svg style="left:1094.0px;top:404.0px" width="15" height="15" viewBox="0 0 14 14"><path class="icf" d="M1 1h2v10l10 .5v2H1zM4.500 1h1.500v8H4.500z"/><path class="ic" d="M8 3h4M8 5.500h4M8 8h2M7 9.500l4-4"/></svg>
<svg style="left:1094.0px;top:449.5px" width="15" height="15" viewBox="0 0 14 14"><path class="ic" d="M11.500 9.500A5.500 5.500 0 1 1 12.500 7"/><circle class="ic" cx="7" cy="7" r="1.500"/><text x="10" y="13.500" font-size="5" font-weight="bold" fill="#d9d9db" font-family="Liberation Sans,sans-serif">x</text></svg>
<svg style="left:1094.0px;top:468.5px" width="15" height="15" viewBox="0 0 14 14"><path class="ic" d="M11.500 9.500A5.500 5.500 0 1 1 12.500 7"/><circle class="ic" cx="7" cy="7" r="1.500"/><text x="10" y="13.500" font-size="5" font-weight="bold" fill="#d9d9db" font-family="Liberation Sans,sans-serif">y</text></svg>
<svg style="left:1094.0px;top:487.5px" width="15" height="15" viewBox="0 0 14 14"><path class="ic" d="M11.500 9.500A5.500 5.500 0 1 1 12.500 7"/><circle class="ic" cx="7" cy="7" r="1.500"/><text x="10" y="13.500" font-size="5" font-weight="bold" fill="#d9d9db" font-family="Liberation Sans,sans-serif">z</text></svg>
<svg style="left:1094.5px;top:507.0px" width="14" height="14" viewBox="0 0 14 14"><path class="ic" d="M4.500 1.500h5M4.500 12.500h5M7 3v8M5.500 4.500l1.500-1.500 1.500 1.500M5.500 9.500l1.500 1.500 1.500-1.500"/></svg>
<svg style="left:1094.5px;top:526.0px" width="14" height="14" viewBox="0 0 14 14"><path class="ic" d="M1.500 4.500v5M12.500 4.500v5M3 7h8M4.500 5.500l-1.500 1.500 1.500 1.500M9.500 5.500l1.500 1.500-1.500 1.500"/></svg>
<svg style="left:1094.0px;top:570.5px" width="15" height="15" viewBox="0 0 14 14"><path class="ic" d="M1 1h12v12H1z"/><path class="ic" d="M4 3v7h7M3 4.500l1-1.500 1 1.500M9.500 9l1.500 1-1.500 1"/></svg>
<svg style="left:1094.0px;top:587.0px" width="15" height="15" viewBox="0 0 14 14"><path class="ic" d="M3 2v9h9M2 3.500l1-1.500 1 1.500M10.500 10l1.500 1-1.500 1"/><path class="icf" d="M1.500 10h3v3h-3zM7 1.500h2v2H7zM10.500 1.500h2v2h-2z"/></svg>
<svg style="left:1094.0px;top:604.0px" width="15" height="15" viewBox="0 0 14 14"><path class="ic" d="M3 2v9h9M2 3.500l1-1.500 1 1.500M10.500 10l1.500 1-1.500 1"/><circle class="icf" cx="10.500" cy="3.500" r="2"/></svg>
<div class="t" style="left:1098px;top:623px;font-size:11px;font-weight:bold;color:#e8e8ea">A</div>
<svg style="left:1094.0px;top:638.5px" width="15" height="15" viewBox="0 0 14 14"><path class="ic" d="M3 2v9h9M2 3.500l1-1.500 1 1.500M10.500 10l1.500 1-1.500 1"/><text x="8" y="6.500" font-size="6" font-weight="bold" fill="#d9d9db" font-family="Liberation Sans,sans-serif">A</text></svg>
<div class="a" style="left:0px;top:677px;width:1400px;height:17px;background:#1e1f22;"></div>
<div class="a" style="left:0px;top:677px;width:1400px;height:1px;background:#2c2d31;"></div>
<div class="t" style="left:-1px;top:682px;font-size:9.5px;font-weight:bold;color:#f0f0f2;transform:scaleX(0.95)">Command Window</div>
<div class="a" style="left:0px;top:694px;width:1400px;height:52px;background:#131416;"></div>
<div class="a" style="left:0px;top:746px;width:1400px;height:12px;background:#1a1b1e;"></div>
<div class="a" style="left:0px;top:745.5px;width:1400px;height:1px;background:#232428;"></div>
<div class="t" style="left:-1px;top:701.2px;font-size:9.5px;color:#ededef;transform:scaleX(1)">STRETCH</div>
<div class="t" style="left:-1px;top:712.2px;font-size:9.5px;color:#ededef;transform:scaleX(1)">Options: <span style="color:#2c5ab8;text-decoration:underline;text-decoration-color:rgba(44,90,184,.65)">Base point</span>, <span style="color:#2c5ab8;text-decoration:underline;text-decoration-color:rgba(44,90,184,.65)">SCale</span>, <span style="color:#2c5ab8;text-decoration:underline;text-decoration-color:rgba(44,90,184,.65)">Copy</span>, <span style="color:#2c5ab8;text-decoration:underline;text-decoration-color:rgba(44,90,184,.65)">Undo</span>, <span style="color:#2c5ab8;text-decoration:underline;text-decoration-color:rgba(44,90,184,.65)">eXit</span> or</div>
<div class="t" style="left:-1px;top:723.2px;font-size:9.5px;color:#ededef;font-weight:bold;transform:scaleX(1)">Stretch point»</div>
<div class="t" style="left:-1px;top:734.2px;font-size:9.5px;color:#ededef;transform:scaleX(1)">: «Cancel»</div>
<div class="t" style="left:0px;top:748px;font-size:9px;color:#aaa">:</div>
<div class="a" style="left:1386px;top:694px;width:14px;height:52px;background:#17181a;"></div>
<div class="a" style="left:1388.500px;top:699px;width:0;height:0;border-left:4px solid transparent;border-right:4px solid transparent;border-bottom:5px solid #f0f0f2"></div>
<div class="a" style="left:1388.500px;top:739px;width:0;height:0;border-left:4px solid transparent;border-right:4px solid transparent;border-top:5px solid #f0f0f2"></div>
<div class="a" style="left:1388px;top:727px;width:10px;height:7px;background:#3a3b3f;"></div>
<svg style="left:1370px;top:681px" width="28" height="11" viewBox="0 0 28 11"><path d="M2 4h5v5H2zM4 4V2h5v5H7" stroke="#f0f0f2" stroke-width="1.100" fill="none"/><path d="M19 2.500l6 6M25 2.500l-6 6" stroke="#f0f0f2" stroke-width="1.400" fill="none"/></svg>
<div class="a" style="left:0px;top:758px;width:1400px;height:25px;background:#3a3b3f;"></div>
<div class="t" style="left:-3px;top:767.5px;font-size:9.5px;color:#d8d8da">DraftSight 2026 x64</div>
<div class="a" style="left:486px;top:762px;width:19px;height:19px;background:#2a2b2f;border:1px solid #45464a"></div>
<div class="a" style="left:510px;top:762px;width:19px;height:19px;background:#2a2b2f;border:1px solid #45464a"></div>
<div class="a" style="left:534px;top:762px;width:19px;height:19px;background:#2a2b2f;border:1px solid #45464a"></div>
<div class="a" style="left:558px;top:762px;width:19px;height:19px;background:#2a2b2f;border:1px solid #45464a"></div>
<div class="a" style="left:582px;top:762px;width:19px;height:19px;background:#2a2b2f;border:1px solid #45464a"></div>
<div class="a" style="left:606px;top:762px;width:19px;height:19px;background:#2a2b2f;border:1px solid #45464a"></div>
<div class="a" style="left:630.5px;top:762px;width:19px;height:19px;background:#2a2b2f;border:1px solid #45464a"></div>
<div class="a" style="left:655px;top:762px;width:19px;height:19px;background:#2a2b2f;border:1px solid #45464a"></div>
<div class="a" style="left:680px;top:762px;width:19px;height:19px;background:#2a2b2f;border:1px solid #45464a"></div>
<div class="a" style="left:704.5px;top:762px;width:62px;height:19px;background:#2a2b2f;border:1px solid #45464a"></div>
<div class="t c" style="left:735.5px;top:767px;font-size:9.5px;color:#e8e8ea">Dynamic CCS</div>
<div class="a" style="left:770px;top:762px;width:19px;height:19px;background:#2a2b2f;border:1px solid #45464a"></div>
<div class="a" style="left:795px;top:762px;width:70px;height:19px;background:#2a2b2f;border:1px solid #45464a"></div>
<div class="t" style="left:798px;top:767px;font-size:9.5px;color:#e8e8ea">Annotation</div>
<div class="arr" style="left:854px;top:770px;border-left-width:3.500px;border-right-width:3.500px;border-top-width:4px"></div>
<div class="t" style="left:870px;top:767px;font-size:9.500px;color:#d8d8da">(1:1)</div>
<div class="t" style="left:892px;top:767px;font-size:9.500px;color:#d8d8da">(-6,267,0)</div>
<svg style="left:464px;top:764px" width="15" height="15" viewBox="0 0 15 15"><path class="ic dim" d="M3 2h4l-2 5zM5 7v4"/><circle class="ic dim" cx="10" cy="11" r="1.500"/></svg>
<svg style="left:488px;top:764px" width="15" height="15" viewBox="0 0 15 15"><path class="ic dim" stroke-dasharray="1.500 1" d="M2 2h10v10"/><path class="icf" d="M4 3v9.500l2.500-2 1.500 3.500 1.500-.7-1.500-3.300h3.500z"/></svg>
<svg style="left:512px;top:764px" width="15" height="15" viewBox="0 0 15 15"><path class="ic" stroke-width="1" d="M2 3h11M2 6h11M2 9h11M2 12h11M3 2v11M6 2v11M9 2v11M12 2v11"/></svg>
<svg style="left:536px;top:764px" width="15" height="15" viewBox="0 0 15 15"><path class="ic" d="M2 5l9-2.500v10l-9-2.500zM1 7.500h13M8 2v11"/></svg>
<svg style="left:560px;top:764px" width="15" height="15" viewBox="0 0 15 15"><circle class="ic" cx="6.500" cy="7.500" r="4.500"/><path class="ic" d="M6.500 7.500l5-5M9 7.500h4.500" stroke-dasharray="2 1"/></svg>
<svg style="left:584px;top:764px" width="15" height="15" viewBox="0 0 15 15"><path class="icf" d="M5 3v9l2.300-2 1.500 3.300 1.400-.6-1.500-3.200h3.300z"/><path class="ic" d="M1.500 2h3M1.500 2v4M1.500 4h2M13 3v8"/></svg>
<svg style="left:608px;top:764px" width="15" height="15" viewBox="0 0 15 15"><path class="icf" d="M6 13l2-10h1.500l2.500 10z"/><path class="ic" d="M1.500 2h3M1.500 2v4M1.500 4h2"/></svg>
<svg style="left:632.5px;top:764px" width="15" height="15" viewBox="0 0 15 15"><path class="ic" stroke-dasharray="1.500 1.200" d="M2 12v-9h6l4 4v5z"/><path class="ic" d="M4.500 11v-5h3l2.500 2.500v2.500z"/></svg>
<svg style="left:657px;top:764px" width="15" height="15" viewBox="0 0 15 15"><path class="ic" d="M5 5h7v8H5z"/><path class="icf" d="M7.500 1.500h2v2h-2zM1.500 8h2v2h-2z"/></svg>
<svg style="left:682px;top:764px" width="15" height="15" viewBox="0 0 15 15"><rect class="icf" x="4" y="4" width="7" height="7" rx="1"/></svg>
<svg style="left:772px;top:764px" width="15" height="15" viewBox="0 0 15 15"><path d="M7.500 2v11M2 7.500h11" stroke="#f0f0f2" stroke-width="1.600"/></svg>
<svg style="left:1357px;top:761px" width="43" height="20" viewBox="0 0 43 20"><path class="ic" d="M2 6v11h10V7l-2-3H5zM4 6V3h5"/><path class="ic" d="M23 6v11h6M23 6l2-3h5l2 3v3M25 6V3"/><path class="icf" d="M30 9h9v10h-9z" opacity=".8"/><path d="M32 12h5M32 14.500h5M32 17h5" stroke="#2a2b2f" stroke-width="1"/></svg>
</div></body></html>
